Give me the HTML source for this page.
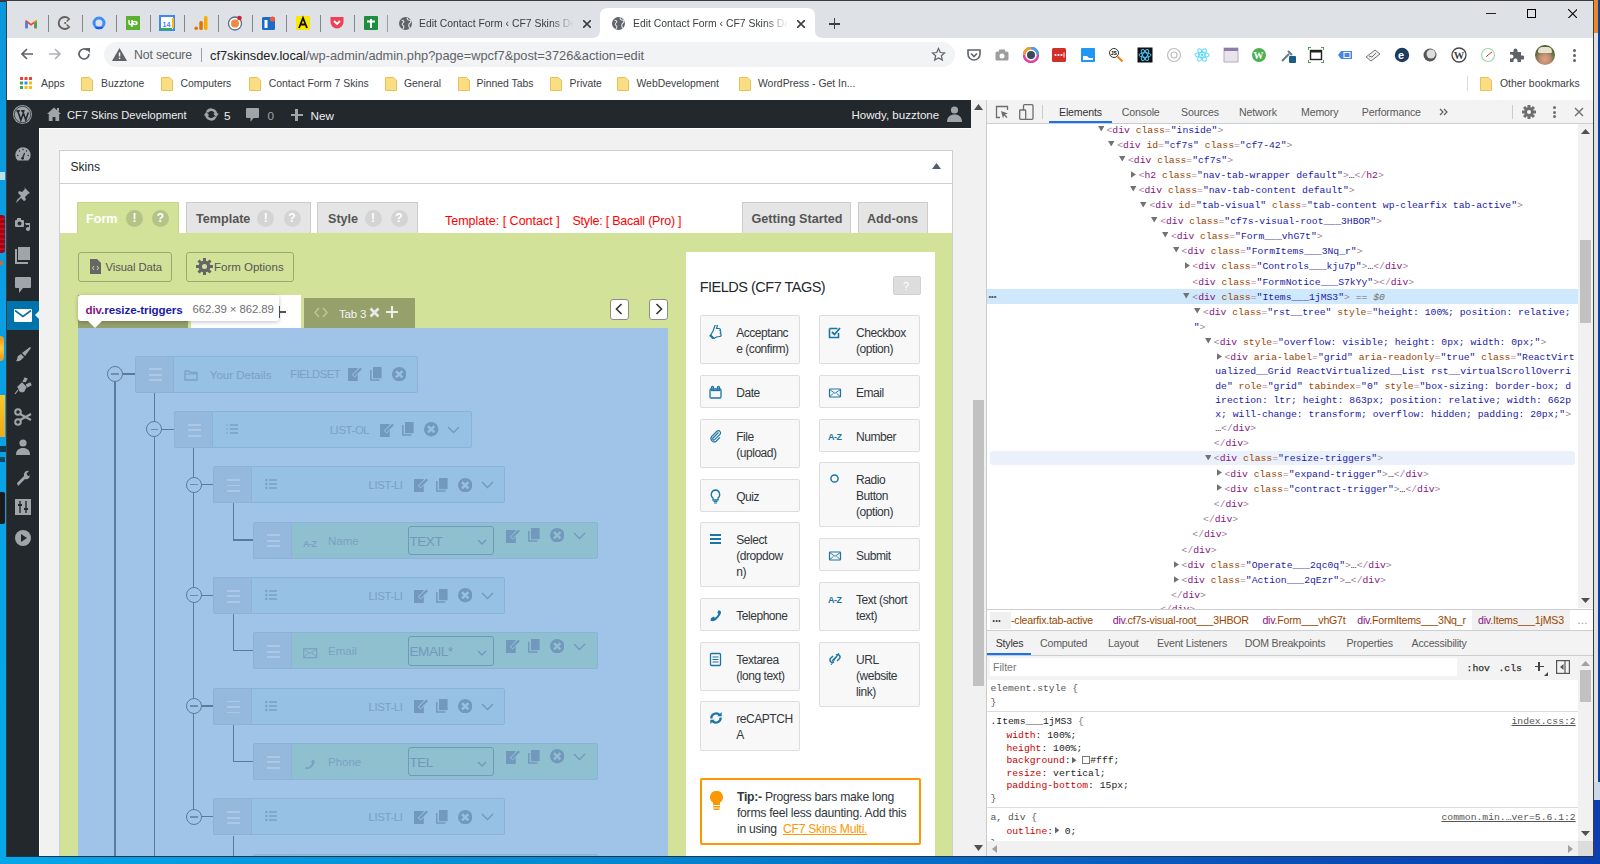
<!DOCTYPE html>
<html><head><meta charset="utf-8"><style>
html,body{margin:0;padding:0}
body{width:1600px;height:864px;overflow:hidden;position:relative;background:#0a98dc;font-family:"Liberation Sans",sans-serif}
body div{position:absolute;box-sizing:content-box}
body span div, body div span{position:static}
</style></head><body>
<div style="left:0px;top:0px;width:7px;height:864px;background:linear-gradient(#0a98dc,#08a4e6 60%,#06a8ea);"></div>
<div style="left:1594px;top:0px;width:6px;height:864px;background:linear-gradient(#e98a22 0,#e98a22 33px,#e0e0e0 33px,#e0e0e0 782px,#c8d8e8 782px,#c8d8e8 800px,#0d3fae 800px);"></div>
<div style="left:1598px;top:0px;width:2px;height:782px;background:#0b3fa8;"></div>
<div style="left:0px;top:215px;width:5px;height:38px;background:repeating-linear-gradient(#a8000f 0,#a8000f 3px,#c0101c 3px,#c0101c 5px);border-radius:0 3px 3px 0;"></div>
<div style="left:0px;top:261px;width:3px;height:4px;background:#d06a20;"></div>
<div style="left:0px;top:336px;width:4px;height:25px;background:radial-gradient(circle at 0 50%,#ffd040,#f0a020 70%);border-radius:0 12px 12px 0;"></div>
<div style="left:0px;top:395px;width:5px;height:42px;background:linear-gradient(#f8c828,#f0a818);"></div>
<div style="left:0px;top:446px;width:6px;height:6px;background:#111;opacity:.7;"></div>
<div style="left:0px;top:457px;width:5px;height:5px;background:#111;opacity:.6;"></div>
<div style="left:0px;top:492px;width:5px;height:32px;background:#1a1a1a;border-radius:0 2px 2px 0;"></div>
<div style="left:0px;top:172px;width:5px;height:8px;background:#eee;opacity:.8;"></div>
<div style="left:0px;top:0px;width:7px;height:2px;background:#3a3a3a;"></div>
<div style="left:6px;top:0px;width:1588px;height:857px;background:#3c3c3c;"></div>
<div style="left:7px;top:1px;width:1586px;height:37px;background:#dee1e6;"></div>
<div style="left:48px;top:15px;width:1px;height:17px;background:#80868b;"></div>
<div style="left:82px;top:15px;width:1px;height:17px;background:#80868b;"></div>
<div style="left:116px;top:15px;width:1px;height:17px;background:#80868b;"></div>
<div style="left:150px;top:15px;width:1px;height:17px;background:#80868b;"></div>
<div style="left:184px;top:15px;width:1px;height:17px;background:#80868b;"></div>
<div style="left:218px;top:15px;width:1px;height:17px;background:#80868b;"></div>
<div style="left:252px;top:15px;width:1px;height:17px;background:#80868b;"></div>
<div style="left:286px;top:15px;width:1px;height:17px;background:#80868b;"></div>
<div style="left:320px;top:15px;width:1px;height:17px;background:#80868b;"></div>
<div style="left:354px;top:15px;width:1px;height:17px;background:#80868b;"></div>
<svg style="position:absolute;left:23px;top:15px;width:16px;height:16px" viewBox="0 0 16 16"><g transform="translate(1.5 2.5) scale(0.82)"><path d="M1 4v9h3V7l4 3 4-3v6h3V4l-1-1-6 4.5L2 3z" fill="#ea4335"/><path d="M1 4v9h3V7z" fill="#4285f4"/><path d="M12 7v6h3V4z" fill="#34a853"/><path d="M15 4l-1-1-2 1.5V7z" fill="#fbbc04"/></g></svg>
<svg style="position:absolute;left:57px;top:15px;width:16px;height:16px" viewBox="0 0 16 16"><path d="M11.8 3.6A6 6 0 1 0 11.8 12.4" stroke="#616161" stroke-width="1.9" fill="none"/><circle cx="8.2" cy="8" r="1.1" fill="#616161"/><path d="M9.6 6.6l3.2-3.2M9.6 9.4l3.2 3.2" stroke="#616161" stroke-width="1.4"/></svg>
<svg style="position:absolute;left:91px;top:15px;width:16px;height:16px" viewBox="0 0 16 16"><circle cx="8" cy="8" r="5" stroke="#3f8ef7" stroke-width="3" fill="none"/><path d="M4 12h8l-1 2H5z" fill="#2456f0"/></svg>
<svg style="position:absolute;left:125px;top:15px;width:16px;height:16px" viewBox="0 0 16 16"><rect x="1" y="1" width="14" height="14" fill="#6fda44" /><rect x="1" y="1" width="14" height="14" fill="#5cb030"/><path d="M4 5v3c0 2 3 2 3 0V5M7 12V8c0-2 5-2 5 0s-4 2-4 0" stroke="#fff" stroke-width="1.4" fill="none"/></svg>
<svg style="position:absolute;left:159px;top:15px;width:16px;height:16px" viewBox="0 0 16 16"><rect x="1" y="1" width="14" height="14" fill="#fff" stroke="#4285f4" stroke-width="2"/><rect x="13" y="3" width="2" height="10" fill="#fbbc04"/><rect x="1" y="13" width="12" height="2" fill="#34a853"/><text x="3.5" y="11.5" font-size="7" font-family="Liberation Sans" font-weight="bold" fill="#4285f4">14</text></svg>
<svg style="position:absolute;left:193px;top:15px;width:16px;height:16px" viewBox="0 0 16 16"><rect x="11" y="1" width="3.5" height="14" rx="1.5" fill="#f9ab00"/><rect x="6.3" y="6" width="3.5" height="9" rx="1.5" fill="#e37400"/><circle cx="3.2" cy="13.2" r="1.8" fill="#e37400"/></svg>
<svg style="position:absolute;left:227px;top:15px;width:16px;height:16px" viewBox="0 0 16 16"><circle cx="8" cy="8.5" r="6.5" fill="#fff" stroke="#5b6f8a" stroke-width="1.3"/><circle cx="8" cy="8.5" r="4" fill="#f08a3c"/><circle cx="12.5" cy="3" r="2.3" fill="#d0223a"/></svg>
<svg style="position:absolute;left:261px;top:15px;width:16px;height:16px" viewBox="0 0 16 16"><rect x="1" y="2" width="13" height="13" rx="1.5" fill="#1b6ac9"/><rect x="3.5" y="5" width="3" height="8" fill="#fff"/><circle cx="11.5" cy="4" r="2.6" fill="#ef5a3a"/></svg>
<svg style="position:absolute;left:295px;top:15px;width:16px;height:16px" viewBox="0 0 16 16"><rect x="1" y="1" width="14" height="14" fill="#fce903"/><path d="M4 13L8 3l4 10M5.5 9.5h5" stroke="#111" stroke-width="1.8" fill="none"/></svg>
<svg style="position:absolute;left:329px;top:15px;width:16px;height:16px" viewBox="0 0 16 16"><path d="M1.5 2h13v5a6.5 6.5 0 0 1-13 0z" fill="#ef4056"/><path d="M5 6l3 3 3-3" stroke="#fff" stroke-width="1.8" fill="none"/></svg>
<svg style="position:absolute;left:363px;top:15px;width:16px;height:16px" viewBox="0 0 16 16"><rect x="1" y="1" width="14" height="14" rx="1" fill="#1e8e3e"/><path d="M8 4v9M4 6.5h8" stroke="#fff" stroke-width="2"/></svg>
<div style="left:387px;top:15px;width:1px;height:17px;background:#9aa0a6;"></div>
<svg style="position:absolute;left:399px;top:17px;width:13px;height:13px" viewBox="0 0 16 16"><circle cx="8" cy="8" r="8" fill="#5f6368"/><path d="M3 4c2 0 3 1 3 2s-2 1-2 3 2 1 2 3c0 1-1 2-1 3M10 1c0 2 1 3 3 3s2 2 1 3-2 1-2 3 1 3 1 4" stroke="#dee1e6" stroke-width="1.4" fill="none"/></svg>
<div style="left:419px;top:15.84px;font-family:'Liberation Sans', sans-serif;font-size:12px;line-height:15.0px;color:#3c4043;white-space:pre;width:155px;overflow:hidden;font-size:10.4px;-webkit-mask-image:linear-gradient(90deg,#000 85%,transparent);">Edit Contact Form ‹ CF7 Skins De</div>
<svg style="position:absolute;left:583px;top:20px;width:8px;height:8px" viewBox="0 0 8 8"><path d="M0 0L8 8M8 0L0 8" stroke="#3c4043" stroke-width="1.6"/></svg>
<svg style="left:592px;top:8px;width:232px;height:30px;position:absolute" viewBox="0 0 232 30"><path d="M0 30 Q8 30 8 22 L8 8 Q8 0 16 0 L215 0 Q223 0 223 8 L223 22 Q223 30 231 30 Z" fill="#fff"/></svg>
<svg style="position:absolute;left:612px;top:17px;width:13px;height:13px" viewBox="0 0 16 16"><circle cx="8" cy="8" r="8" fill="#5f6368"/><path d="M3 4c2 0 3 1 3 2s-2 1-2 3 2 1 2 3c0 1-1 2-1 3M10 1c0 2 1 3 3 3s2 2 1 3-2 1-2 3 1 3 1 4" stroke="#dee1e6" stroke-width="1.4" fill="none"/></svg>
<div style="left:633px;top:15.84px;font-family:'Liberation Sans', sans-serif;font-size:12px;line-height:15.0px;color:#3c4043;white-space:pre;width:155px;overflow:hidden;font-size:10.4px;-webkit-mask-image:linear-gradient(90deg,#000 85%,transparent);">Edit Contact Form ‹ CF7 Skins De</div>
<svg style="position:absolute;left:797px;top:20px;width:8px;height:8px" viewBox="0 0 8 8"><path d="M0 0L8 8M8 0L0 8" stroke="#3c4043" stroke-width="1.6"/></svg>
<div style="left:829px;top:23px;width:11px;height:1.6px;background:#3c4043;"></div>
<div style="left:833.7px;top:18px;width:1.6px;height:11px;background:#3c4043;"></div>
<div style="left:1486px;top:13.3px;width:9.5px;height:1.2px;background:#222;"></div>
<div style="left:1527px;top:9px;width:9px;height:9px;border:1px solid #000;box-sizing:border-box;"></div>
<svg style="position:absolute;left:1567.5px;top:8.8px;width:9.5px;height:9.5px" viewBox="0 0 10 10"><path d="M0 0L10 10M10 0L0 10" stroke="#000" stroke-width="1.1"/></svg>
<div style="left:7px;top:38px;width:1586px;height:62px;background:#fff;"></div>
<svg style="position:absolute;left:19px;top:46px;width:16px;height:16px" viewBox="0 0 16 16"><path d="M14 8H3M8 3L3 8l5 5" stroke="#5f6368" stroke-width="1.7" fill="none"/></svg>
<svg style="position:absolute;left:47px;top:46px;width:16px;height:16px" viewBox="0 0 16 16"><path d="M2 8h11M8 3l5 5-5 5" stroke="#b0b3b8" stroke-width="1.7" fill="none"/></svg>
<svg style="position:absolute;left:76px;top:46px;width:16px;height:16px" viewBox="0 0 16 16"><path d="M13 8A5 5 0 1 1 11.5 4.4" stroke="#5f6368" stroke-width="1.7" fill="none"/><path d="M9 2h5v5z" fill="#5f6368"/></svg>
<div style="left:104px;top:42px;width:851px;height:25px;background:#f1f3f4;border-radius:13px;"></div>
<svg style="position:absolute;left:112px;top:48px;width:15px;height:13px" viewBox="0 0 15 13"><path d="M7.5 0L15 13H0z" fill="#5f6368"/><rect x="6.8" y="4.5" width="1.5" height="4" fill="#f1f3f4"/><rect x="6.8" y="9.6" width="1.5" height="1.5" fill="#f1f3f4"/></svg>
<div style="left:134px;top:48.34px;font-family:'Liberation Sans', sans-serif;font-size:12px;line-height:15.0px;color:#5f6368;white-space:pre;font-size:12.3px;letter-spacing:-0.15px;">Not secure</div>
<div style="left:201px;top:48px;width:1px;height:14px;background:#9aa0a6;"></div>
<div style="left:210px;top:48.34px;font-family:'Liberation Sans', sans-serif;font-size:12px;line-height:15.0px;color:#202124;white-space:pre;font-size:12.8px;">cf7skinsdev.local<span style="color:#5f6368">/wp-admin/admin.php?page=wpcf7&amp;post=3726&amp;action=edit</span></div>
<svg style="position:absolute;left:931px;top:47px;width:15px;height:15px" viewBox="0 0 24 24"><path d="M12 2.5l2.9 6.3 6.9.7-5.2 4.6 1.5 6.8L12 17.4l-6.1 3.5 1.5-6.8-5.2-4.6 6.9-.7z" stroke="#5f6368" stroke-width="2" fill="none"/></svg>
<svg style="position:absolute;left:965.6px;top:46.5px;width:16px;height:16px" viewBox="0 0 16 16"><path d="M2 3h12v4a6 6 0 0 1-12 0z" stroke="#5f6368" stroke-width="1.6" fill="none"/><path d="M5 6.5l3 3 3-3" stroke="#5f6368" stroke-width="1.6" fill="none"/></svg>
<svg style="position:absolute;left:994.0px;top:46.5px;width:16px;height:16px" viewBox="0 0 16 16"><rect x="1.5" y="4.5" width="13" height="9" rx="1.5" fill="#9e9e9e"/><rect x="5" y="2.5" width="6" height="3" fill="#9e9e9e"/><circle cx="8" cy="9" r="2.5" fill="#fff"/></svg>
<svg style="position:absolute;left:1022.6px;top:46.5px;width:16px;height:16px" viewBox="0 0 16 16"><circle cx="8" cy="8" r="7" fill="none" stroke="#e040a0" stroke-width="2.5"/><path d="M8 1a7 7 0 0 1 7 7" stroke="#3ea0f0" stroke-width="2.5" fill="none"/><path d="M1 8a7 7 0 0 1 7-7" stroke="#f0a020" stroke-width="2.5" fill="none"/><circle cx="8" cy="8" r="4" fill="#3a4a5a"/></svg>
<svg style="position:absolute;left:1051.0px;top:46.5px;width:16px;height:16px" viewBox="0 0 16 16"><rect x="1" y="1" width="14" height="14" rx="1.5" fill="#d32d27"/><circle cx="4.5" cy="8" r="1.1" fill="#fff"/><circle cx="7.5" cy="8" r="1.1" fill="#fff"/><circle cx="10.5" cy="8" r="1.1" fill="#fff"/><rect x="12.5" y="5.5" width="1" height="5" fill="#fff"/></svg>
<svg style="position:absolute;left:1079.6px;top:46.5px;width:16px;height:16px" viewBox="0 0 16 16"><rect x="1" y="1" width="14" height="14" rx="1" fill="#2196f3"/><path d="M3 9h4l2 2h4v2H3z" fill="#fff"/></svg>
<svg style="position:absolute;left:1108.0px;top:46.5px;width:16px;height:16px" viewBox="0 0 16 16"><circle cx="6" cy="6" r="4.5" fill="#fff" stroke="#333" stroke-width="1"/><text x="2.8" y="8" font-size="5" font-weight="bold" font-family="Liberation Sans">JS</text><path d="M9.5 9.5l5 5" stroke="#f57c00" stroke-width="1.8"/></svg>
<svg style="position:absolute;left:1137.0px;top:46.5px;width:16px;height:16px" viewBox="0 0 16 16"><rect x="0.5" y="0.5" width="15" height="15" fill="#111"/><ellipse cx="8" cy="8" rx="6" ry="2.3" stroke="#4fc3f7" fill="none" stroke-width="1"/><ellipse cx="8" cy="8" rx="6" ry="2.3" stroke="#4fc3f7" fill="none" stroke-width="1" transform="rotate(60 8 8)"/><ellipse cx="8" cy="8" rx="6" ry="2.3" stroke="#4fc3f7" fill="none" stroke-width="1" transform="rotate(-60 8 8)"/></svg>
<svg style="position:absolute;left:1165.6px;top:46.5px;width:16px;height:16px" viewBox="0 0 16 16"><circle cx="8" cy="8" r="6.5" fill="none" stroke="#bdbdbd" stroke-width="1.2"/><circle cx="8" cy="8" r="3" fill="none" stroke="#bdbdbd" stroke-width="1.2"/></svg>
<svg style="position:absolute;left:1194.0px;top:46.5px;width:16px;height:16px" viewBox="0 0 16 16"><ellipse cx="8" cy="8" rx="7" ry="2.5" stroke="#61dafb" fill="none" stroke-width="1.1"/><ellipse cx="8" cy="8" rx="7" ry="2.5" stroke="#61dafb" fill="none" stroke-width="1.1" transform="rotate(60 8 8)"/><ellipse cx="8" cy="8" rx="7" ry="2.5" stroke="#61dafb" fill="none" stroke-width="1.1" transform="rotate(-60 8 8)"/><circle cx="8" cy="8" r="1.3" fill="#61dafb"/></svg>
<svg style="position:absolute;left:1222.6px;top:46.5px;width:16px;height:16px" viewBox="0 0 16 16"><rect x="1" y="1" width="14" height="14" fill="#e8e4ec" stroke="#b6a8c4"/><rect x="1" y="1" width="14" height="3" fill="#8e7aa8"/></svg>
<svg style="position:absolute;left:1251.0px;top:46.5px;width:16px;height:16px" viewBox="0 0 16 16"><circle cx="8" cy="8" r="7" fill="#4caf50"/><text x="2.6" y="11.8" font-size="10" font-weight="bold" font-family="Liberation Serif" fill="#fff">W</text></svg>
<svg style="position:absolute;left:1280.0px;top:46.5px;width:16px;height:16px" viewBox="0 0 16 16"><path d="M2 14l7-7M8 4l4 4" stroke="#607d8b" stroke-width="2"/><rect x="9" y="9" width="7" height="7" rx="1" fill="#1a5b8a"/></svg>
<svg style="position:absolute;left:1308.0px;top:46.5px;width:16px;height:16px" viewBox="0 0 16 16"><rect x="2.5" y="3.5" width="11" height="9" fill="none" stroke="#222" stroke-width="1.4"/><rect x="2.5" y="3.5" width="11" height="2" fill="#222"/><path d="M0 0h3M0 0v3M16 0h-3M16 0v3M0 16h3M0 16v-3M16 16h-3M16 16v-3" stroke="#2e7d32" stroke-width="1.5"/></svg>
<svg style="position:absolute;left:1337.0px;top:46.5px;width:16px;height:16px" viewBox="0 0 16 16"><path d="M1 8l3-4h11v8H4z" fill="#4a86e8"/><rect x="7" y="5.5" width="6" height="5" fill="none" stroke="#fff" stroke-width="1"/></svg>
<svg style="position:absolute;left:1365.0px;top:46.5px;width:16px;height:16px" viewBox="0 0 16 16"><path d="M1 10l9-7 5 4-9 7z" fill="#eee" stroke="#777" stroke-width="1"/><path d="M4 9l3 1 4-4" stroke="#555" stroke-width="0.8" fill="none"/></svg>
<svg style="position:absolute;left:1394.0px;top:46.5px;width:16px;height:16px" viewBox="0 0 16 16"><circle cx="8" cy="8" r="7.2" fill="#1d3a5f"/><text x="4" y="12" font-size="11" font-weight="bold" font-family="Liberation Sans" fill="#fff">e</text></svg>
<svg style="position:absolute;left:1422.0px;top:46.5px;width:16px;height:16px" viewBox="0 0 16 16"><circle cx="8" cy="8" r="6.5" fill="#555"/><circle cx="9" cy="7" r="4.5" fill="#ddd"/></svg>
<svg style="position:absolute;left:1451.0px;top:46.5px;width:16px;height:16px" viewBox="0 0 16 16"><circle cx="8" cy="8" r="7" fill="#fff" stroke="#444" stroke-width="1.3"/><text x="2.8" y="12" font-size="10.5" font-weight="bold" font-family="Liberation Serif" fill="#444">W</text></svg>
<svg style="position:absolute;left:1480.0px;top:46.5px;width:16px;height:16px" viewBox="0 0 16 16"><circle cx="8" cy="8" r="6.5" fill="none" stroke="#a5d6a7" stroke-width="1.2"/><path d="M8 8l4-3M8 8l-2 2" stroke="#e53935" stroke-width="1"/><path d="M8 8l-1 1" stroke="#3949ab" stroke-width="1"/></svg>
<svg style="position:absolute;left:1508.0px;top:46.5px;width:16px;height:16px" viewBox="0 0 16 16"><path d="M2 5h3.5V3.5a2 2 0 0 1 4 0V5H13v3.5h1.5a2 2 0 0 1 0 4H13V15H9.5v-1.5a2 2 0 0 0-4 0V15H2v-3.5h1.5a2 2 0 0 0 0-4H2z" fill="#5f6368"/></svg>
<div style="left:1535px;top:45px;width:20px;height:20px;border-radius:50%;background:radial-gradient(circle at 50% 70%,#d9a58a 0,#c48c70 30%,#5b6a3a 60%,#3e4a2a 100%);overflow:hidden"><div style="position:absolute;left:3px;top:2px;width:14px;height:6px;background:#e8e2d0;border-radius:6px 6px 2px 2px"></div></div>
<div style="left:1572.5px;top:48.5px;width:3px;height:3px;background:#5f6368;border-radius:50%;"></div>
<div style="left:1572.5px;top:53.5px;width:3px;height:3px;background:#5f6368;border-radius:50%;"></div>
<div style="left:1572.5px;top:58.5px;width:3px;height:3px;background:#5f6368;border-radius:50%;"></div>
<svg style="position:absolute;left:20px;top:77px;width:13px;height:13px" viewBox="0 0 13 13"><rect x="0.0" y="0.0" width="3" height="3" fill="#ea4335"/><rect x="4.5" y="0.0" width="3" height="3" fill="#ea4335"/><rect x="9.0" y="0.0" width="3" height="3" fill="#ea4335"/><rect x="0.0" y="4.5" width="3" height="3" fill="#34a853"/><rect x="4.5" y="4.5" width="3" height="3" fill="#4285f4"/><rect x="9.0" y="4.5" width="3" height="3" fill="#fbbc05"/><rect x="0.0" y="9.0" width="3" height="3" fill="#34a853"/><rect x="4.5" y="9.0" width="3" height="3" fill="#fbbc05"/><rect x="9.0" y="9.0" width="3" height="3" fill="#fbbc05"/></svg>
<div style="left:41px;top:76.34px;font-family:'Liberation Sans', sans-serif;font-size:12px;line-height:15.0px;color:#3c4043;white-space:pre;font-size:10.4px;">Apps</div>
<svg style="position:absolute;left:81px;top:77px;width:12px;height:14px" viewBox="0 0 12 14"><path d="M0.5 0.5h8l3 3v10h-11z" fill="#fbdd84" stroke="#e8c15a" stroke-width="1"/></svg>
<div style="left:101px;top:76.34px;font-family:'Liberation Sans', sans-serif;font-size:12px;line-height:15.0px;color:#3c4043;white-space:pre;font-size:10.4px;">Buzztone</div>
<svg style="position:absolute;left:161px;top:77px;width:12px;height:14px" viewBox="0 0 12 14"><path d="M0.5 0.5h8l3 3v10h-11z" fill="#fbdd84" stroke="#e8c15a" stroke-width="1"/></svg>
<div style="left:180.5px;top:76.34px;font-family:'Liberation Sans', sans-serif;font-size:12px;line-height:15.0px;color:#3c4043;white-space:pre;font-size:10.4px;">Computers</div>
<svg style="position:absolute;left:249px;top:77px;width:12px;height:14px" viewBox="0 0 12 14"><path d="M0.5 0.5h8l3 3v10h-11z" fill="#fbdd84" stroke="#e8c15a" stroke-width="1"/></svg>
<div style="left:268.75px;top:76.34px;font-family:'Liberation Sans', sans-serif;font-size:12px;line-height:15.0px;color:#3c4043;white-space:pre;font-size:10.4px;">Contact Form 7 Skins</div>
<svg style="position:absolute;left:385px;top:77px;width:12px;height:14px" viewBox="0 0 12 14"><path d="M0.5 0.5h8l3 3v10h-11z" fill="#fbdd84" stroke="#e8c15a" stroke-width="1"/></svg>
<div style="left:404px;top:76.34px;font-family:'Liberation Sans', sans-serif;font-size:12px;line-height:15.0px;color:#3c4043;white-space:pre;font-size:10.4px;">General</div>
<svg style="position:absolute;left:458px;top:77px;width:12px;height:14px" viewBox="0 0 12 14"><path d="M0.5 0.5h8l3 3v10h-11z" fill="#fbdd84" stroke="#e8c15a" stroke-width="1"/></svg>
<div style="left:476.5px;top:76.34px;font-family:'Liberation Sans', sans-serif;font-size:12px;line-height:15.0px;color:#3c4043;white-space:pre;font-size:10.4px;">Pinned Tabs</div>
<svg style="position:absolute;left:550px;top:77px;width:12px;height:14px" viewBox="0 0 12 14"><path d="M0.5 0.5h8l3 3v10h-11z" fill="#fbdd84" stroke="#e8c15a" stroke-width="1"/></svg>
<div style="left:569.5px;top:76.34px;font-family:'Liberation Sans', sans-serif;font-size:12px;line-height:15.0px;color:#3c4043;white-space:pre;font-size:10.4px;">Private</div>
<svg style="position:absolute;left:617px;top:77px;width:12px;height:14px" viewBox="0 0 12 14"><path d="M0.5 0.5h8l3 3v10h-11z" fill="#fbdd84" stroke="#e8c15a" stroke-width="1"/></svg>
<div style="left:636.5px;top:76.34px;font-family:'Liberation Sans', sans-serif;font-size:12px;line-height:15.0px;color:#3c4043;white-space:pre;font-size:10.4px;">WebDevelopment</div>
<svg style="position:absolute;left:739px;top:77px;width:12px;height:14px" viewBox="0 0 12 14"><path d="M0.5 0.5h8l3 3v10h-11z" fill="#fbdd84" stroke="#e8c15a" stroke-width="1"/></svg>
<div style="left:758px;top:76.34px;font-family:'Liberation Sans', sans-serif;font-size:12px;line-height:15.0px;color:#3c4043;white-space:pre;font-size:10.4px;">WordPress - Get In...</div>
<div style="left:1467px;top:76px;width:1px;height:15px;background:#dadce0;"></div>
<svg style="position:absolute;left:1479.5px;top:77px;width:12px;height:14px" viewBox="0 0 12 14"><path d="M0.5 0.5h8l3 3v10h-11z" fill="#fbdd84" stroke="#e8c15a" stroke-width="1"/></svg>
<div style="left:1500px;top:76.34px;font-family:'Liberation Sans', sans-serif;font-size:12px;line-height:15.0px;color:#3c4043;white-space:pre;font-size:10.4px;">Other bookmarks</div>
<div style="left:7px;top:100px;width:980px;height:756px;background:#f1f1f1;"></div>
<div style="left:7px;top:100px;width:964px;height:29px;background:#23282d;"></div>
<div style="left:7px;top:129px;width:32px;height:727px;background:#23282d;"></div>
<div style="left:39px;top:128px;width:932px;height:1px;background:#fff;"></div>
<div style="left:39px;top:128px;width:1px;height:728px;background:#fff;"></div>
<svg style="position:absolute;left:12.7px;top:104.9px;width:19px;height:19px" viewBox="0 0 20 20"><circle cx="10" cy="10" r="10" fill="#a0a5aa"/><circle cx="10" cy="10" r="8.6" fill="none" stroke="#23282d" stroke-width="0.8"/><path d="M3.6 6.2h3.6M5 6.2l3.3 9.6 2.3-6.6M8.6 6.2h3.6M10.2 6.2l3.3 9.6 2.6-7.8" stroke="#23282d" stroke-width="1.7" fill="none"/></svg>
<svg style="position:absolute;left:46.5px;top:107.3px;width:14px;height:14px" viewBox="0 0 14 14"><path d="M7 .5L0 7h1.8v7h3.8v-4h2.8v4h3.8V7H14z" fill="#a0a5aa"/><rect x="10" y="1" width="2" height="3.5" fill="#a0a5aa"/></svg>
<div style="left:67px;top:108.04px;font-family:'Liberation Sans', sans-serif;font-size:12px;line-height:15.0px;color:#eee;white-space:pre;font-size:11.1px;">CF7 Skins Development</div>
<svg style="position:absolute;left:202.5px;top:107.8px;width:16.5px;height:13px" viewBox="0 0 16.5 13"><path d="M4.09 4.1A4.8 4.8 0 0 1 13.05 6.5M12.41 8.9A4.8 4.8 0 0 1 3.45 6.5" stroke="#a0a5aa" stroke-width="2.5" fill="none"/><path d="M10.2 5.6h5.7L13.05 9.3z" fill="#a0a5aa"/><path d="M.6 7.4h5.7L3.45 3.7z" fill="#a0a5aa"/></svg>
<div style="left:224px;top:108.04px;font-family:'Liberation Sans', sans-serif;font-size:12px;line-height:15.0px;color:#eee;white-space:pre;font-size:11.7px;">5</div>
<svg style="position:absolute;left:246px;top:108px;width:13px;height:14px" viewBox="0 0 13 14"><path d="M1 0h11a1 1 0 0 1 1 1v8a1 1 0 0 1-1 1H7.5L4.5 14v-4H1a1 1 0 0 1-1-1V1a1 1 0 0 1 1-1z" fill="#a0a5aa"/></svg>
<div style="left:267.5px;top:108.04px;font-family:'Liberation Sans', sans-serif;font-size:12px;line-height:15.0px;color:#a0a5aa;white-space:pre;font-size:11.7px;">0</div>
<div style="left:290.5px;top:113.7px;width:12.5px;height:2.8px;background:#a0a5aa;"></div>
<div style="left:295.35px;top:108.9px;width:2.8px;height:12.5px;background:#a0a5aa;"></div>
<div style="left:310.5px;top:108.04px;font-family:'Liberation Sans', sans-serif;font-size:12px;line-height:15.0px;color:#eee;white-space:pre;font-size:11.7px;">New</div>
<div style="left:851.5px;top:108.04px;font-family:'Liberation Sans', sans-serif;font-size:12px;line-height:15.0px;color:#eee;white-space:pre;font-size:11.55px;">Howdy, buzztone</div>
<svg style="position:absolute;left:947px;top:106px;width:15px;height:16px" viewBox="0 0 15 16"><circle cx="7.5" cy="4" r="3.6" fill="#a0a5aa"/><path d="M0 16c0-5 3-7.5 7.5-7.5S15 11 15 16z" fill="#a0a5aa"/></svg>
<svg style="position:absolute;left:14px;top:145px;width:18px;height:18px" viewBox="0 0 18 18"><path d="M3.6 15.5A7.7 7.7 0 1 1 14.4 15.5z" fill="#a0a5aa"/><path d="M8.6 13l2-5" stroke="#23282d" stroke-width="1.3"/><circle cx="8.6" cy="13.3" r="1.4" fill="#23282d"/><circle cx="3.8" cy="10.5" r=".7" fill="#23282d"/><circle cx="5.5" cy="6" r=".7" fill="#23282d"/><circle cx="9" cy="4.5" r=".7" fill="#23282d"/><circle cx="12.5" cy="6" r=".7" fill="#23282d"/><circle cx="14.2" cy="10.5" r=".7" fill="#23282d"/></svg>
<svg style="position:absolute;left:14px;top:185px;width:18px;height:18px" viewBox="0 0 18 18"><path d="M10 2l6 6-2 1-3 3 1 3-2 1-3-3-5 5 1-3 4-4-3-3 1-2 3 1 3-3z" fill="#a0a5aa"/></svg>
<svg style="position:absolute;left:14px;top:215px;width:18px;height:18px" viewBox="0 0 18 18"><rect x="1" y="5" width="9" height="7" rx="1" fill="#a0a5aa"/><rect x="3" y="3" width="4" height="3" fill="#a0a5aa"/><path d="M11 8h5v6a2 2 0 1 1-1-1.7V10h-3z" fill="#a0a5aa"/><circle cx="5.5" cy="8.5" r="2" fill="#23282d"/></svg>
<svg style="position:absolute;left:14px;top:246px;width:18px;height:18px" viewBox="0 0 18 18"><rect x="4" y="1" width="12" height="13" fill="#a0a5aa"/><path d="M2 3v14h12" stroke="#a0a5aa" stroke-width="2" fill="none"/></svg>
<svg style="position:absolute;left:14px;top:276px;width:18px;height:18px" viewBox="0 0 18 18"><path d="M2 1h14a1 1 0 0 1 1 1v9a1 1 0 0 1-1 1H9l-4 5v-5H2a1 1 0 0 1-1-1V2a1 1 0 0 1 1-1z" fill="#a0a5aa"/></svg>
<svg style="position:absolute;left:14px;top:346px;width:18px;height:18px" viewBox="0 0 18 18"><path d="M16 1l1 1-6 8-3-3zM7 8l3 3-2 2c-1 1-3 3-6 2 2-2 1-4 2-5z" fill="#a0a5aa"/></svg>
<svg style="position:absolute;left:14px;top:377px;width:18px;height:18px" viewBox="0 0 18 18"><path d="M4 10l4-4 4 4-2 4c-1 1-3 1-4 0zM9 5l2-4 2 1-2 3M12 8l4-2 1 2-4 2M4 13l-3 4" fill="#a0a5aa" stroke="#a0a5aa" stroke-width="1.2"/></svg>
<svg style="position:absolute;left:14px;top:408px;width:18px;height:18px" viewBox="0 0 18 18"><circle cx="4" cy="4" r="2.8" fill="none" stroke="#a0a5aa" stroke-width="2"/><circle cx="4" cy="14" r="2.8" fill="none" stroke="#a0a5aa" stroke-width="2"/><path d="M6 6l11 6M6 12l11-6" stroke="#a0a5aa" stroke-width="2"/></svg>
<svg style="position:absolute;left:14px;top:438px;width:18px;height:18px" viewBox="0 0 18 18"><circle cx="9" cy="5" r="3.6" fill="#a0a5aa"/><path d="M2 17c0-5 3-7 7-7s7 2 7 7z" fill="#a0a5aa"/></svg>
<svg style="position:absolute;left:14px;top:468px;width:18px;height:18px" viewBox="0 0 18 18"><path d="M3 15l7-7a4 4 0 0 1 5-5l-2.5 2.5 1 2 2 1L16 6a4 4 0 0 1-5 5l-7 7z" fill="#a0a5aa"/></svg>
<svg style="position:absolute;left:14px;top:498px;width:18px;height:18px" viewBox="0 0 18 18"><rect x="1" y="1" width="16" height="16" fill="#a0a5aa"/><path d="M6 3v12M12 3v12" stroke="#23282d" stroke-width="1.4"/><rect x="4" y="6" width="4" height="2" fill="#23282d"/><rect x="10" y="10" width="4" height="2" fill="#23282d"/></svg>
<svg style="position:absolute;left:14px;top:529px;width:18px;height:18px" viewBox="0 0 18 18"><circle cx="9" cy="9" r="8" fill="#a0a5aa"/><path d="M7 5l6 4-6 4z" fill="#23282d"/></svg>
<div style="left:7px;top:301px;width:32px;height:29px;background:#0073aa;"></div>
<svg style="position:absolute;left:14px;top:309px;width:18px;height:13px" viewBox="0 0 18 13"><rect x="0" y="0" width="18" height="13" rx="1" fill="#fff"/><path d="M1 1.5l8 6 8-6" stroke="#0073aa" stroke-width="1.6" fill="none"/></svg>
<svg style="position:absolute;left:35px;top:310px;width:5px;height:10px" viewBox="0 0 5 10"><path d="M5 0L0 5l5 5z" fill="#f1f1f1"/></svg>
<div style="left:971px;top:100px;width:15px;height:756px;background:#f1f1f1;"></div>
<svg style="position:absolute;left:974px;top:104px;width:9px;height:6px" viewBox="0 0 9 6"><path d="M0 6L4.5 0 9 6z" fill="#505050"/></svg>
<div style="left:973px;top:400px;width:11px;height:286px;background:#c1c1c1;"></div>
<svg style="position:absolute;left:974px;top:845px;width:9px;height:6px" viewBox="0 0 9 6"><path d="M0 0L4.5 6 9 0z" fill="#505050"/></svg>
<div style="left:59px;top:150px;width:894px;height:706px;background:#fff;border:1px solid #ccd0d4;box-sizing:border-box;border-bottom:none;"></div>
<div style="left:60px;top:183px;width:892px;height:1px;background:#ccd0d4;"></div>
<div style="left:70.5px;top:160.34px;font-family:'Liberation Sans', sans-serif;font-size:12px;line-height:15.0px;color:#23282d;white-space:pre;font-size:12.1px;">Skins</div>
<svg style="position:absolute;left:932px;top:163px;width:9px;height:6px" viewBox="0 0 9 6"><path d="M0 6L4.5 0 9 6z" fill="#555d66"/></svg>
<div style="left:77px;top:202px;width:102px;height:31px;background:#d3e299;border:1px solid #c5d68a;border-bottom:none;box-sizing:border-box;"></div>
<div style="left:86px;top:210.87px;font-family:'Liberation Sans', sans-serif;font-size:13px;line-height:16.25px;color:#fff;white-space:pre;font-weight:bold;font-size:12.6px;">Form</div>
<div style="left:126.1px;top:210.0px;width:17px;height:17px;border-radius:50%;background:#b4c489;color:#fff;font:bold 12px 'Liberation Sans', sans-serif;line-height:17px;text-align:center">!</div>
<div style="left:151.9px;top:210.0px;width:17px;height:17px;border-radius:50%;background:#b4c489;color:#fff;font:bold 12px 'Liberation Sans', sans-serif;line-height:17px;text-align:center">?</div>
<div style="left:186px;top:202px;width:125px;height:31px;background:#e5e5e5;border:1px solid #ccc;border-bottom:none;box-sizing:border-box;"></div>
<div style="left:196px;top:210.87px;font-family:'Liberation Sans', sans-serif;font-size:13px;line-height:16.25px;color:#555;white-space:pre;font-weight:bold;font-size:12.6px;">Template</div>
<div style="left:257.3px;top:210.0px;width:17px;height:17px;border-radius:50%;background:#d4d4d4;color:#fff;font:bold 12px 'Liberation Sans', sans-serif;line-height:17px;text-align:center">!</div>
<div style="left:283.5px;top:210.0px;width:17px;height:17px;border-radius:50%;background:#d4d4d4;color:#fff;font:bold 12px 'Liberation Sans', sans-serif;line-height:17px;text-align:center">?</div>
<div style="left:317px;top:202px;width:101px;height:31px;background:#e5e5e5;border:1px solid #ccc;border-bottom:none;box-sizing:border-box;"></div>
<div style="left:328px;top:210.87px;font-family:'Liberation Sans', sans-serif;font-size:13px;line-height:16.25px;color:#555;white-space:pre;font-weight:bold;font-size:12.6px;">Style</div>
<div style="left:364.5px;top:210.0px;width:17px;height:17px;border-radius:50%;background:#d4d4d4;color:#fff;font:bold 12px 'Liberation Sans', sans-serif;line-height:17px;text-align:center">!</div>
<div style="left:390.5px;top:210.0px;width:17px;height:17px;border-radius:50%;background:#d4d4d4;color:#fff;font:bold 12px 'Liberation Sans', sans-serif;line-height:17px;text-align:center">?</div>
<div style="left:445px;top:212.67px;font-family:'Liberation Sans', sans-serif;font-size:13px;line-height:16.25px;color:#f00;white-space:pre;font-size:12.5px;">Template: [ Contact ]</div>
<div style="left:572.5px;top:212.67px;font-family:'Liberation Sans', sans-serif;font-size:13px;line-height:16.25px;color:#f00;white-space:pre;font-size:12.5px;letter-spacing:-0.22px;">Style: [ Bacall (Pro) ]</div>
<div style="left:742px;top:202px;width:109px;height:31px;background:#e5e5e5;border:1px solid #ccc;border-bottom:none;box-sizing:border-box;"></div>
<div style="left:751.5px;top:210.87px;font-family:'Liberation Sans', sans-serif;font-size:13px;line-height:16.25px;color:#555;white-space:pre;font-weight:bold;font-size:12.6px;">Getting Started</div>
<div style="left:857.5px;top:202px;width:70px;height:31px;background:#e5e5e5;border:1px solid #ccc;border-bottom:none;box-sizing:border-box;"></div>
<div style="left:867px;top:210.87px;font-family:'Liberation Sans', sans-serif;font-size:13px;line-height:16.25px;color:#555;white-space:pre;font-weight:bold;font-size:12.6px;">Add-ons</div>
<div style="left:60px;top:233px;width:892px;height:623px;background:#d3e299;"></div>
<div style="left:78px;top:252px;width:94px;height:30px;border:1px solid #9daa6f;border-radius:3px;box-sizing:border-box;"></div>
<svg style="position:absolute;left:90px;top:259px;width:11px;height:15px" viewBox="0 0 11 15"><path d="M0 0h7l4 4v11H0z" fill="#666"/><path d="M4 7L2.5 9 4 11M7 7l1.5 2L7 11" stroke="#d3e299" stroke-width="1" fill="none"/></svg>
<div style="left:105.5px;top:260.34px;font-family:'Liberation Sans', sans-serif;font-size:12px;line-height:15.0px;color:#555;white-space:pre;font-size:11.3px;letter-spacing:-0.1px;">Visual Data</div>
<div style="left:185.5px;top:252px;width:108px;height:30px;border:1px solid #9daa6f;border-radius:3px;box-sizing:border-box;"></div>
<svg style="position:absolute;left:196px;top:258px;width:17px;height:17px" viewBox="0 0 17 17"><rect x="7" y="0" width="3" height="17" fill="#666" transform="rotate(0 8.5 8.5)"/><rect x="7" y="0" width="3" height="17" fill="#666" transform="rotate(45 8.5 8.5)"/><rect x="7" y="0" width="3" height="17" fill="#666" transform="rotate(90 8.5 8.5)"/><rect x="7" y="0" width="3" height="17" fill="#666" transform="rotate(135 8.5 8.5)"/><circle cx="8.5" cy="8.5" r="6" fill="#666"/><circle cx="8.5" cy="8.5" r="2.5" fill="#d3e299"/></svg>
<div style="left:214px;top:260.34px;font-family:'Liberation Sans', sans-serif;font-size:12px;line-height:15.0px;color:#555;white-space:pre;font-size:11.5px;">Form Options</div>
<div style="left:78px;top:295px;width:110px;height:33px;background:#95a06a;"></div>
<div style="left:191px;top:294.5px;width:110px;height:33.5px;background:#fff;"></div>
<div style="left:304px;top:298px;width:111px;height:30px;background:#95a06a;"></div>
<svg style="position:absolute;left:314px;top:307px;width:14px;height:11px" viewBox="0 0 14 11"><path d="M5 1L1 5.5 5 10M9 1l4 4.5L9 10" stroke="#b9c98c" stroke-width="1.6" fill="none"/></svg>
<div style="left:339px;top:306.84px;font-family:'Liberation Sans', sans-serif;font-size:12px;line-height:15.0px;color:#f4f4f4;white-space:pre;font-size:11.5px;letter-spacing:-0.2px;">Tab 3</div>
<svg style="position:absolute;left:369px;top:307px;width:11px;height:11px" viewBox="0 0 11 11"><path d="M1.5 1.5l8 8M9.5 1.5l-8 8" stroke="#e8e8e8" stroke-width="2.6"/></svg>
<div style="left:386px;top:310.5px;width:12px;height:2.6px;background:#eee;"></div>
<div style="left:390.7px;top:305.8px;width:2.6px;height:12px;background:#eee;"></div>
<div style="left:609.5px;top:298.5px;width:19px;height:21px;background:#fff;border:1px solid #8c8c8c;border-radius:3px;box-sizing:border-box;"></div>
<svg style="position:absolute;left:615px;top:303px;width:8px;height:12px" viewBox="0 0 8 12"><path d="M6.5 1L1.5 6l5 5" stroke="#333" stroke-width="1.6" fill="none"/></svg>
<div style="left:649px;top:298.5px;width:19px;height:21px;background:#fff;border:1px solid #8c8c8c;border-radius:3px;box-sizing:border-box;"></div>
<svg style="position:absolute;left:655px;top:303px;width:8px;height:12px" viewBox="0 0 8 12"><path d="M1.5 1l5 5-5 5" stroke="#333" stroke-width="1.6" fill="none"/></svg>
<div style="left:273px;top:310.8px;width:12.5px;height:2.4px;background:#50555a;"></div>
<div style="left:277.8px;top:306px;width:2.4px;height:12px;background:#50555a;"></div>
<div style="left:78px;top:328px;width:590px;height:528px;background:#a0c4e8;"></div>
<div style="left:114.275px;top:382px;width:1.25px;height:474px;background:#5b7b9c;"></div>
<div style="left:153.775px;top:392.5px;width:1.25px;height:28.5px;background:#5b7b9c;"></div>
<div style="left:153.775px;top:437px;width:1.25px;height:419px;background:#5b7b9c;"></div>
<div style="left:193.175px;top:447.8px;width:1.25px;height:368.99999999999994px;background:#5b7b9c;"></div>
<div style="left:106.80px;top:365.90px;width:16.2px;height:16.2px;border:1.35px solid #5b7b9c;border-radius:50%;box-sizing:border-box;background:#a0c4e8"></div>
<div style="left:111.10000000000001px;top:373.2px;width:7.6px;height:1.6px;background:#6e8eae;"></div>
<div style="left:122.9px;top:373.3px;width:12.400000000000006px;height:1.4px;background:#5b7b9c;"></div>
<div style="left:146.30px;top:421.25px;width:16.2px;height:16.2px;border:1.35px solid #5b7b9c;border-radius:50%;box-sizing:border-box;background:#a0c4e8"></div>
<div style="left:150.6px;top:428.54999999999995px;width:7.6px;height:1.6px;background:#6e8eae;"></div>
<div style="left:162.4px;top:428.65px;width:12.0px;height:1.4px;background:#5b7b9c;"></div>
<div style="left:185.70px;top:476.60px;width:16.2px;height:16.2px;border:1.35px solid #5b7b9c;border-radius:50%;box-sizing:border-box;background:#a0c4e8"></div>
<div style="left:190.0px;top:483.9px;width:7.6px;height:1.6px;background:#6e8eae;"></div>
<div style="left:201.8px;top:484.0px;width:11.399999999999977px;height:1.4px;background:#5b7b9c;"></div>
<div style="left:232.875px;top:503.45px;width:1.25px;height:36.599999999999994px;background:#5b7b9c;"></div>
<div style="left:232.875px;top:539.425px;width:20.125px;height:1.25px;background:#5b7b9c;"></div>
<div style="left:185.70px;top:587.30px;width:16.2px;height:16.2px;border:1.35px solid #5b7b9c;border-radius:50%;box-sizing:border-box;background:#a0c4e8"></div>
<div style="left:190.0px;top:594.6px;width:7.6px;height:1.6px;background:#6e8eae;"></div>
<div style="left:201.8px;top:594.6999999999999px;width:11.399999999999977px;height:1.4px;background:#5b7b9c;"></div>
<div style="left:232.875px;top:614.15px;width:1.25px;height:36.599999999999994px;background:#5b7b9c;"></div>
<div style="left:232.875px;top:650.125px;width:20.125px;height:1.25px;background:#5b7b9c;"></div>
<div style="left:185.70px;top:698.00px;width:16.2px;height:16.2px;border:1.35px solid #5b7b9c;border-radius:50%;box-sizing:border-box;background:#a0c4e8"></div>
<div style="left:190.0px;top:705.3000000000001px;width:7.6px;height:1.6px;background:#6e8eae;"></div>
<div style="left:201.8px;top:705.4px;width:11.399999999999977px;height:1.4px;background:#5b7b9c;"></div>
<div style="left:232.875px;top:724.8499999999999px;width:1.25px;height:36.599999999999994px;background:#5b7b9c;"></div>
<div style="left:232.875px;top:760.8249999999999px;width:20.125px;height:1.25px;background:#5b7b9c;"></div>
<div style="left:185.70px;top:808.70px;width:16.2px;height:16.2px;border:1.35px solid #5b7b9c;border-radius:50%;box-sizing:border-box;background:#a0c4e8"></div>
<div style="left:190.0px;top:816.0px;width:7.6px;height:1.6px;background:#6e8eae;"></div>
<div style="left:201.8px;top:816.0999999999999px;width:11.399999999999977px;height:1.4px;background:#5b7b9c;"></div>
<div style="left:232.875px;top:835.55px;width:1.25px;height:36.599999999999994px;background:#5b7b9c;"></div>
<div style="left:232.875px;top:871.525px;width:20.125px;height:1.25px;background:#5b7b9c;"></div>
<div style="left:135.3px;top:355.6px;width:282.3px;height:37px;background:#96c0e4;border:1px solid #8cb2d8;border-radius:2px;box-sizing:border-box;"></div>
<div style="left:135.3px;top:355.6px;width:38.5px;height:37px;background:#95b8dd;border:1px solid #8cb2d8;border-radius:2px 0 0 2px;box-sizing:border-box;"></div>
<div style="left:148.8px;top:368.40000000000003px;width:13px;height:1.9px;background:#acc8e6;"></div>
<div style="left:148.8px;top:373.90000000000003px;width:13px;height:1.9px;background:#acc8e6;"></div>
<div style="left:148.8px;top:379.40000000000003px;width:13px;height:1.9px;background:#acc8e6;"></div>
<svg style="position:absolute;left:184.3px;top:368.6px;width:14px;height:12px" viewBox="0 0 14 12"><path d="M1 2h4l1 1.5h7V11H1z" stroke="#7ba0c3" stroke-width="1.3" fill="none"/><path d="M1 5h12" stroke="#7ba0c3" stroke-width="1"/></svg>
<div style="left:209.8px;top:367.94px;font-family:'Liberation Sans', sans-serif;font-size:12px;line-height:15.0px;color:#7ba0c3;white-space:pre;font-size:11.5px;">Your Details</div>
<div style="left:290.3px;top:367.44px;font-family:'Liberation Sans', sans-serif;font-size:12px;line-height:15.0px;color:#7ba0c3;white-space:pre;font-size:11.2px;letter-spacing:-0.45px;">FIELDSET</div>
<svg style="position:absolute;left:348.0px;top:366.3px;width:15px;height:15px" viewBox="0 0 15 15"><rect x="0" y="2" width="9.8" height="13" fill="#7398bd"/><path d="M5.2 10.2L13 2.4" stroke="#96c0e4" stroke-width="4"/><path d="M5.8 9.6L13.2 2.2" stroke="#7398bd" stroke-width="2.2"/></svg>
<svg style="position:absolute;left:370.0px;top:367.1px;width:13px;height:14px" viewBox="0 0 13 14"><rect x="3" y="0" width="8.6" height="11.2" fill="#7398bd"/><path d="M.8 3v10h8.6" stroke="#7398bd" stroke-width="1.5" fill="none"/></svg>
<svg style="position:absolute;left:391.8px;top:366.9px;width:14.4px;height:14.4px" viewBox="0 0 14 14"><circle cx="7" cy="7" r="7" fill="#7398bd"/><path d="M3.9 3.9l6.2 6.2M10.1 3.9l-6.2 6.2" stroke="#96c0e4" stroke-width="2.4"/></svg>
<div style="left:174.4px;top:410.95px;width:297.3px;height:37px;background:#96c0e4;border:1px solid #8cb2d8;border-radius:2px;box-sizing:border-box;"></div>
<div style="left:174.4px;top:410.95px;width:38.5px;height:37px;background:#95b8dd;border:1px solid #8cb2d8;border-radius:2px 0 0 2px;box-sizing:border-box;"></div>
<div style="left:187.9px;top:423.75px;width:13px;height:1.9px;background:#acc8e6;"></div>
<div style="left:187.9px;top:429.25px;width:13px;height:1.9px;background:#acc8e6;"></div>
<div style="left:187.9px;top:434.75px;width:13px;height:1.9px;background:#acc8e6;"></div>
<svg style="position:absolute;left:225.9px;top:422.9px;width:13px;height:12px" viewBox="0 0 13 12"><path d="M1 1v2M1 5v2M1 9v2" stroke="#7ba0c3" stroke-width="0.9"/><path d="M4 2h8M4 6h8M4 10h8" stroke="#7ba0c3" stroke-width="1.3"/></svg>
<div style="left:329.70000000000005px;top:422.79px;font-family:'Liberation Sans', sans-serif;font-size:12px;line-height:15.0px;color:#7ba0c3;white-space:pre;font-size:11.4px;letter-spacing:-0.4px;">LIST-OL</div>
<svg style="position:absolute;left:380.4px;top:421.6px;width:15px;height:15px" viewBox="0 0 15 15"><rect x="0" y="2" width="9.8" height="13" fill="#7398bd"/><path d="M5.2 10.2L13 2.4" stroke="#96c0e4" stroke-width="4"/><path d="M5.8 9.6L13.2 2.2" stroke="#7398bd" stroke-width="2.2"/></svg>
<svg style="position:absolute;left:402.4px;top:422.4px;width:13px;height:14px" viewBox="0 0 13 14"><rect x="3" y="0" width="8.6" height="11.2" fill="#7398bd"/><path d="M.8 3v10h8.6" stroke="#7398bd" stroke-width="1.5" fill="none"/></svg>
<svg style="position:absolute;left:424.2px;top:422.2px;width:14.4px;height:14.4px" viewBox="0 0 14 14"><circle cx="7" cy="7" r="7" fill="#7398bd"/><path d="M3.9 3.9l6.2 6.2M10.1 3.9l-6.2 6.2" stroke="#96c0e4" stroke-width="2.4"/></svg>
<svg style="position:absolute;left:446.8px;top:425.9px;width:13px;height:8px" viewBox="0 0 13 8"><path d="M1 1l5.5 5.5L12 1" stroke="#7398bd" stroke-width="1.4" fill="none"/></svg>
<div style="left:213.2px;top:466.3px;width:292.3px;height:37px;background:#96c0e4;border:1px solid #8cb2d8;border-radius:2px;box-sizing:border-box;"></div>
<div style="left:213.2px;top:466.3px;width:38.5px;height:37px;background:#95b8dd;border:1px solid #8cb2d8;border-radius:2px 0 0 2px;box-sizing:border-box;"></div>
<div style="left:226.7px;top:479.1px;width:13px;height:1.9px;background:#acc8e6;"></div>
<div style="left:226.7px;top:484.6px;width:13px;height:1.9px;background:#acc8e6;"></div>
<div style="left:226.7px;top:490.1px;width:13px;height:1.9px;background:#acc8e6;"></div>
<svg style="position:absolute;left:264.7px;top:478.3px;width:13px;height:12px" viewBox="0 0 13 12"><circle cx="1.3" cy="2" r="1.2" fill="#7ba0c3"/><circle cx="1.3" cy="6" r="1.2" fill="#7ba0c3"/><circle cx="1.3" cy="10" r="1.2" fill="#7ba0c3"/><path d="M4 2h8M4 6h8M4 10h8" stroke="#7ba0c3" stroke-width="1.3"/></svg>
<div style="left:368.6px;top:478.14px;font-family:'Liberation Sans', sans-serif;font-size:12px;line-height:15.0px;color:#7ba0c3;white-space:pre;font-size:11.4px;letter-spacing:-0.4px;">LIST-LI</div>
<svg style="position:absolute;left:414.2px;top:477.0px;width:15px;height:15px" viewBox="0 0 15 15"><rect x="0" y="2" width="9.8" height="13" fill="#7398bd"/><path d="M5.2 10.2L13 2.4" stroke="#96c0e4" stroke-width="4"/><path d="M5.8 9.6L13.2 2.2" stroke="#7398bd" stroke-width="2.2"/></svg>
<svg style="position:absolute;left:436.2px;top:477.8px;width:13px;height:14px" viewBox="0 0 13 14"><rect x="3" y="0" width="8.6" height="11.2" fill="#7398bd"/><path d="M.8 3v10h8.6" stroke="#7398bd" stroke-width="1.5" fill="none"/></svg>
<svg style="position:absolute;left:458.0px;top:477.6px;width:14.4px;height:14.4px" viewBox="0 0 14 14"><circle cx="7" cy="7" r="7" fill="#7398bd"/><path d="M3.9 3.9l6.2 6.2M10.1 3.9l-6.2 6.2" stroke="#96c0e4" stroke-width="2.4"/></svg>
<svg style="position:absolute;left:480.6px;top:481.3px;width:13px;height:8px" viewBox="0 0 13 8"><path d="M1 1l5.5 5.5L12 1" stroke="#7398bd" stroke-width="1.4" fill="none"/></svg>
<div style="left:253px;top:521.65px;width:344.6px;height:37px;background:#8fc0cf;border:1px solid #8cb2d8;border-radius:2px;box-sizing:border-box;"></div>
<div style="left:253px;top:521.65px;width:38.5px;height:37px;background:#95b8dd;border:1px solid #8cb2d8;border-radius:2px 0 0 2px;box-sizing:border-box;"></div>
<div style="left:266.5px;top:534.4499999999999px;width:13px;height:1.9px;background:#acc8e6;"></div>
<div style="left:266.5px;top:539.9499999999999px;width:13px;height:1.9px;background:#acc8e6;"></div>
<div style="left:266.5px;top:545.4499999999999px;width:13px;height:1.9px;background:#acc8e6;"></div>
<svg style="position:absolute;left:302.5px;top:536.6px;width:16px;height:12px" viewBox="0 0 16 12"><text x="0" y="9.5" font-size="9" font-weight="bold" font-family="Liberation Sans" fill="#7ba0c3" letter-spacing="-0.5">A-Z</text></svg>
<div style="left:328px;top:533.79px;font-family:'Liberation Sans', sans-serif;font-size:12px;line-height:15.0px;color:#7ba0c3;white-space:pre;font-size:11.5px;">Name</div>
<div style="left:408px;top:525.65px;width:86px;height:29.3px;border:1.3px solid #7398bd;border-radius:3px;box-sizing:border-box;"></div>
<div style="left:409.5px;top:532.58px;font-family:'Liberation Sans', sans-serif;font-size:15px;line-height:18.75px;color:#7398bd;white-space:pre;font-size:13.6px;letter-spacing:-0.5px;">TEXT</div>
<svg style="position:absolute;left:477.0px;top:539.1px;width:10px;height:6px" viewBox="0 0 10 6"><path d="M1 1l4 4 4-4" stroke="#7398bd" stroke-width="1.4" fill="none"/></svg>
<svg style="position:absolute;left:506.3px;top:527.5px;width:15px;height:15px" viewBox="0 0 15 15"><rect x="0" y="2" width="9.8" height="13" fill="#7398bd"/><path d="M5.2 10.2L13 2.4" stroke="#8fc0cf" stroke-width="4"/><path d="M5.8 9.6L13.2 2.2" stroke="#7398bd" stroke-width="2.2"/></svg>
<svg style="position:absolute;left:528.3px;top:528.2px;width:13px;height:14px" viewBox="0 0 13 14"><rect x="3" y="0" width="8.6" height="11.2" fill="#7398bd"/><path d="M.8 3v10h8.6" stroke="#7398bd" stroke-width="1.5" fill="none"/></svg>
<svg style="position:absolute;left:550.1px;top:528.0px;width:14.4px;height:14.4px" viewBox="0 0 14 14"><circle cx="7" cy="7" r="7" fill="#7398bd"/><path d="M3.9 3.9l6.2 6.2M10.1 3.9l-6.2 6.2" stroke="#8fc0cf" stroke-width="2.4"/></svg>
<svg style="position:absolute;left:572.7px;top:531.8px;width:13px;height:8px" viewBox="0 0 13 8"><path d="M1 1l5.5 5.5L12 1" stroke="#7398bd" stroke-width="1.4" fill="none"/></svg>
<div style="left:213.2px;top:577.0px;width:292.3px;height:37px;background:#96c0e4;border:1px solid #8cb2d8;border-radius:2px;box-sizing:border-box;"></div>
<div style="left:213.2px;top:577.0px;width:38.5px;height:37px;background:#95b8dd;border:1px solid #8cb2d8;border-radius:2px 0 0 2px;box-sizing:border-box;"></div>
<div style="left:226.7px;top:589.8px;width:13px;height:1.9px;background:#acc8e6;"></div>
<div style="left:226.7px;top:595.3px;width:13px;height:1.9px;background:#acc8e6;"></div>
<div style="left:226.7px;top:600.8px;width:13px;height:1.9px;background:#acc8e6;"></div>
<svg style="position:absolute;left:264.7px;top:589.0px;width:13px;height:12px" viewBox="0 0 13 12"><circle cx="1.3" cy="2" r="1.2" fill="#7ba0c3"/><circle cx="1.3" cy="6" r="1.2" fill="#7ba0c3"/><circle cx="1.3" cy="10" r="1.2" fill="#7ba0c3"/><path d="M4 2h8M4 6h8M4 10h8" stroke="#7ba0c3" stroke-width="1.3"/></svg>
<div style="left:368.6px;top:588.84px;font-family:'Liberation Sans', sans-serif;font-size:12px;line-height:15.0px;color:#7ba0c3;white-space:pre;font-size:11.4px;letter-spacing:-0.4px;">LIST-LI</div>
<svg style="position:absolute;left:414.2px;top:587.7px;width:15px;height:15px" viewBox="0 0 15 15"><rect x="0" y="2" width="9.8" height="13" fill="#7398bd"/><path d="M5.2 10.2L13 2.4" stroke="#96c0e4" stroke-width="4"/><path d="M5.8 9.6L13.2 2.2" stroke="#7398bd" stroke-width="2.2"/></svg>
<svg style="position:absolute;left:436.2px;top:588.5px;width:13px;height:14px" viewBox="0 0 13 14"><rect x="3" y="0" width="8.6" height="11.2" fill="#7398bd"/><path d="M.8 3v10h8.6" stroke="#7398bd" stroke-width="1.5" fill="none"/></svg>
<svg style="position:absolute;left:458.0px;top:588.3px;width:14.4px;height:14.4px" viewBox="0 0 14 14"><circle cx="7" cy="7" r="7" fill="#7398bd"/><path d="M3.9 3.9l6.2 6.2M10.1 3.9l-6.2 6.2" stroke="#96c0e4" stroke-width="2.4"/></svg>
<svg style="position:absolute;left:480.6px;top:592.0px;width:13px;height:8px" viewBox="0 0 13 8"><path d="M1 1l5.5 5.5L12 1" stroke="#7398bd" stroke-width="1.4" fill="none"/></svg>
<div style="left:253px;top:632.35px;width:344.6px;height:37px;background:#8fc0cf;border:1px solid #8cb2d8;border-radius:2px;box-sizing:border-box;"></div>
<div style="left:253px;top:632.35px;width:38.5px;height:37px;background:#95b8dd;border:1px solid #8cb2d8;border-radius:2px 0 0 2px;box-sizing:border-box;"></div>
<div style="left:266.5px;top:645.15px;width:13px;height:1.9px;background:#acc8e6;"></div>
<div style="left:266.5px;top:650.65px;width:13px;height:1.9px;background:#acc8e6;"></div>
<div style="left:266.5px;top:656.15px;width:13px;height:1.9px;background:#acc8e6;"></div>
<svg style="position:absolute;left:302.5px;top:647.4px;width:16px;height:12px" viewBox="0 0 16 12"><rect x="0.7" y="1.7" width="13" height="9" fill="none" stroke="#7ba0c3" stroke-width="1.2"/><path d="M1 2.5l6 4 6-4M1 10l4.5-4M13.5 10L9 6" stroke="#7ba0c3" stroke-width="1" fill="none"/></svg>
<div style="left:328px;top:644.49px;font-family:'Liberation Sans', sans-serif;font-size:12px;line-height:15.0px;color:#7ba0c3;white-space:pre;font-size:11.5px;">Email</div>
<div style="left:408px;top:636.35px;width:86px;height:29.3px;border:1.3px solid #7398bd;border-radius:3px;box-sizing:border-box;"></div>
<div style="left:409.5px;top:643.28px;font-family:'Liberation Sans', sans-serif;font-size:15px;line-height:18.75px;color:#7398bd;white-space:pre;font-size:13.6px;letter-spacing:-0.5px;">EMAIL*</div>
<svg style="position:absolute;left:477.0px;top:649.9px;width:10px;height:6px" viewBox="0 0 10 6"><path d="M1 1l4 4 4-4" stroke="#7398bd" stroke-width="1.4" fill="none"/></svg>
<svg style="position:absolute;left:506.3px;top:638.2px;width:15px;height:15px" viewBox="0 0 15 15"><rect x="0" y="2" width="9.8" height="13" fill="#7398bd"/><path d="M5.2 10.2L13 2.4" stroke="#8fc0cf" stroke-width="4"/><path d="M5.8 9.6L13.2 2.2" stroke="#7398bd" stroke-width="2.2"/></svg>
<svg style="position:absolute;left:528.3px;top:639.0px;width:13px;height:14px" viewBox="0 0 13 14"><rect x="3" y="0" width="8.6" height="11.2" fill="#7398bd"/><path d="M.8 3v10h8.6" stroke="#7398bd" stroke-width="1.5" fill="none"/></svg>
<svg style="position:absolute;left:550.1px;top:638.8px;width:14.4px;height:14.4px" viewBox="0 0 14 14"><circle cx="7" cy="7" r="7" fill="#7398bd"/><path d="M3.9 3.9l6.2 6.2M10.1 3.9l-6.2 6.2" stroke="#8fc0cf" stroke-width="2.4"/></svg>
<svg style="position:absolute;left:572.7px;top:642.5px;width:13px;height:8px" viewBox="0 0 13 8"><path d="M1 1l5.5 5.5L12 1" stroke="#7398bd" stroke-width="1.4" fill="none"/></svg>
<div style="left:213.2px;top:687.7px;width:292.3px;height:37px;background:#96c0e4;border:1px solid #8cb2d8;border-radius:2px;box-sizing:border-box;"></div>
<div style="left:213.2px;top:687.7px;width:38.5px;height:37px;background:#95b8dd;border:1px solid #8cb2d8;border-radius:2px 0 0 2px;box-sizing:border-box;"></div>
<div style="left:226.7px;top:700.5px;width:13px;height:1.9px;background:#acc8e6;"></div>
<div style="left:226.7px;top:706.0px;width:13px;height:1.9px;background:#acc8e6;"></div>
<div style="left:226.7px;top:711.5px;width:13px;height:1.9px;background:#acc8e6;"></div>
<svg style="position:absolute;left:264.7px;top:699.7px;width:13px;height:12px" viewBox="0 0 13 12"><circle cx="1.3" cy="2" r="1.2" fill="#7ba0c3"/><circle cx="1.3" cy="6" r="1.2" fill="#7ba0c3"/><circle cx="1.3" cy="10" r="1.2" fill="#7ba0c3"/><path d="M4 2h8M4 6h8M4 10h8" stroke="#7ba0c3" stroke-width="1.3"/></svg>
<div style="left:368.6px;top:699.54px;font-family:'Liberation Sans', sans-serif;font-size:12px;line-height:15.0px;color:#7ba0c3;white-space:pre;font-size:11.4px;letter-spacing:-0.4px;">LIST-LI</div>
<svg style="position:absolute;left:414.2px;top:698.4px;width:15px;height:15px" viewBox="0 0 15 15"><rect x="0" y="2" width="9.8" height="13" fill="#7398bd"/><path d="M5.2 10.2L13 2.4" stroke="#96c0e4" stroke-width="4"/><path d="M5.8 9.6L13.2 2.2" stroke="#7398bd" stroke-width="2.2"/></svg>
<svg style="position:absolute;left:436.2px;top:699.2px;width:13px;height:14px" viewBox="0 0 13 14"><rect x="3" y="0" width="8.6" height="11.2" fill="#7398bd"/><path d="M.8 3v10h8.6" stroke="#7398bd" stroke-width="1.5" fill="none"/></svg>
<svg style="position:absolute;left:458.0px;top:699.0px;width:14.4px;height:14.4px" viewBox="0 0 14 14"><circle cx="7" cy="7" r="7" fill="#7398bd"/><path d="M3.9 3.9l6.2 6.2M10.1 3.9l-6.2 6.2" stroke="#96c0e4" stroke-width="2.4"/></svg>
<svg style="position:absolute;left:480.6px;top:702.7px;width:13px;height:8px" viewBox="0 0 13 8"><path d="M1 1l5.5 5.5L12 1" stroke="#7398bd" stroke-width="1.4" fill="none"/></svg>
<div style="left:253px;top:743.05px;width:344.6px;height:37px;background:#8fc0cf;border:1px solid #8cb2d8;border-radius:2px;box-sizing:border-box;"></div>
<div style="left:253px;top:743.05px;width:38.5px;height:37px;background:#95b8dd;border:1px solid #8cb2d8;border-radius:2px 0 0 2px;box-sizing:border-box;"></div>
<div style="left:266.5px;top:755.8499999999999px;width:13px;height:1.9px;background:#acc8e6;"></div>
<div style="left:266.5px;top:761.3499999999999px;width:13px;height:1.9px;background:#acc8e6;"></div>
<div style="left:266.5px;top:766.8499999999999px;width:13px;height:1.9px;background:#acc8e6;"></div>
<svg style="position:absolute;left:302.5px;top:758.0px;width:16px;height:12px" viewBox="0 0 16 12"><path d="M2 10.5c4 2 9-2 10-7.5l-2.5-1.5-1.5 2.5 1.2 1.2c-.8 1.8-2.5 3.5-4.5 4.2l-1.2-1z" fill="#7ba0c3"/></svg>
<div style="left:328px;top:755.19px;font-family:'Liberation Sans', sans-serif;font-size:12px;line-height:15.0px;color:#7ba0c3;white-space:pre;font-size:11.5px;">Phone</div>
<div style="left:408px;top:747.05px;width:86px;height:29.3px;border:1.3px solid #7398bd;border-radius:3px;box-sizing:border-box;"></div>
<div style="left:409.5px;top:753.98px;font-family:'Liberation Sans', sans-serif;font-size:15px;line-height:18.75px;color:#7398bd;white-space:pre;font-size:13.6px;letter-spacing:-0.5px;">TEL</div>
<svg style="position:absolute;left:477.0px;top:760.5px;width:10px;height:6px" viewBox="0 0 10 6"><path d="M1 1l4 4 4-4" stroke="#7398bd" stroke-width="1.4" fill="none"/></svg>
<svg style="position:absolute;left:506.3px;top:748.9px;width:15px;height:15px" viewBox="0 0 15 15"><rect x="0" y="2" width="9.8" height="13" fill="#7398bd"/><path d="M5.2 10.2L13 2.4" stroke="#8fc0cf" stroke-width="4"/><path d="M5.8 9.6L13.2 2.2" stroke="#7398bd" stroke-width="2.2"/></svg>
<svg style="position:absolute;left:528.3px;top:749.6px;width:13px;height:14px" viewBox="0 0 13 14"><rect x="3" y="0" width="8.6" height="11.2" fill="#7398bd"/><path d="M.8 3v10h8.6" stroke="#7398bd" stroke-width="1.5" fill="none"/></svg>
<svg style="position:absolute;left:550.1px;top:749.4px;width:14.4px;height:14.4px" viewBox="0 0 14 14"><circle cx="7" cy="7" r="7" fill="#7398bd"/><path d="M3.9 3.9l6.2 6.2M10.1 3.9l-6.2 6.2" stroke="#8fc0cf" stroke-width="2.4"/></svg>
<svg style="position:absolute;left:572.7px;top:753.1px;width:13px;height:8px" viewBox="0 0 13 8"><path d="M1 1l5.5 5.5L12 1" stroke="#7398bd" stroke-width="1.4" fill="none"/></svg>
<div style="left:213.2px;top:798.4px;width:292.3px;height:37px;background:#96c0e4;border:1px solid #8cb2d8;border-radius:2px;box-sizing:border-box;"></div>
<div style="left:213.2px;top:798.4px;width:38.5px;height:37px;background:#95b8dd;border:1px solid #8cb2d8;border-radius:2px 0 0 2px;box-sizing:border-box;"></div>
<div style="left:226.7px;top:811.1999999999999px;width:13px;height:1.9px;background:#acc8e6;"></div>
<div style="left:226.7px;top:816.6999999999999px;width:13px;height:1.9px;background:#acc8e6;"></div>
<div style="left:226.7px;top:822.1999999999999px;width:13px;height:1.9px;background:#acc8e6;"></div>
<svg style="position:absolute;left:264.7px;top:810.4px;width:13px;height:12px" viewBox="0 0 13 12"><circle cx="1.3" cy="2" r="1.2" fill="#7ba0c3"/><circle cx="1.3" cy="6" r="1.2" fill="#7ba0c3"/><circle cx="1.3" cy="10" r="1.2" fill="#7ba0c3"/><path d="M4 2h8M4 6h8M4 10h8" stroke="#7ba0c3" stroke-width="1.3"/></svg>
<div style="left:368.6px;top:810.24px;font-family:'Liberation Sans', sans-serif;font-size:12px;line-height:15.0px;color:#7ba0c3;white-space:pre;font-size:11.4px;letter-spacing:-0.4px;">LIST-LI</div>
<svg style="position:absolute;left:414.2px;top:809.1px;width:15px;height:15px" viewBox="0 0 15 15"><rect x="0" y="2" width="9.8" height="13" fill="#7398bd"/><path d="M5.2 10.2L13 2.4" stroke="#96c0e4" stroke-width="4"/><path d="M5.8 9.6L13.2 2.2" stroke="#7398bd" stroke-width="2.2"/></svg>
<svg style="position:absolute;left:436.2px;top:809.9px;width:13px;height:14px" viewBox="0 0 13 14"><rect x="3" y="0" width="8.6" height="11.2" fill="#7398bd"/><path d="M.8 3v10h8.6" stroke="#7398bd" stroke-width="1.5" fill="none"/></svg>
<svg style="position:absolute;left:458.0px;top:809.7px;width:14.4px;height:14.4px" viewBox="0 0 14 14"><circle cx="7" cy="7" r="7" fill="#7398bd"/><path d="M3.9 3.9l6.2 6.2M10.1 3.9l-6.2 6.2" stroke="#96c0e4" stroke-width="2.4"/></svg>
<svg style="position:absolute;left:480.6px;top:813.4px;width:13px;height:8px" viewBox="0 0 13 8"><path d="M1 1l5.5 5.5L12 1" stroke="#7398bd" stroke-width="1.4" fill="none"/></svg>
<div style="left:253px;top:853.75px;width:344.6px;height:37px;background:#8fc0cf;border:1px solid #8cb2d8;border-radius:2px;box-sizing:border-box;"></div>
<div style="left:253px;top:853.75px;width:38.5px;height:37px;background:#95b8dd;border:1px solid #8cb2d8;border-radius:2px 0 0 2px;box-sizing:border-box;"></div>
<div style="left:266.5px;top:866.55px;width:13px;height:1.9px;background:#acc8e6;"></div>
<div style="left:266.5px;top:872.05px;width:13px;height:1.9px;background:#acc8e6;"></div>
<div style="left:266.5px;top:877.55px;width:13px;height:1.9px;background:#acc8e6;"></div>
<svg style="position:absolute;left:506.3px;top:859.6px;width:15px;height:15px" viewBox="0 0 15 15"><rect x="0" y="2" width="9.8" height="13" fill="#7398bd"/><path d="M5.2 10.2L13 2.4" stroke="#8fc0cf" stroke-width="4"/><path d="M5.8 9.6L13.2 2.2" stroke="#7398bd" stroke-width="2.2"/></svg>
<svg style="position:absolute;left:528.3px;top:860.4px;width:13px;height:14px" viewBox="0 0 13 14"><rect x="3" y="0" width="8.6" height="11.2" fill="#7398bd"/><path d="M.8 3v10h8.6" stroke="#7398bd" stroke-width="1.5" fill="none"/></svg>
<svg style="position:absolute;left:550.1px;top:860.1px;width:14.4px;height:14.4px" viewBox="0 0 14 14"><circle cx="7" cy="7" r="7" fill="#7398bd"/><path d="M3.9 3.9l6.2 6.2M10.1 3.9l-6.2 6.2" stroke="#8fc0cf" stroke-width="2.4"/></svg>
<svg style="position:absolute;left:572.7px;top:863.9px;width:13px;height:8px" viewBox="0 0 13 8"><path d="M1 1l5.5 5.5L12 1" stroke="#7398bd" stroke-width="1.4" fill="none"/></svg>
<div style="left:78px;top:295px;width:201px;height:26px;background:#fff;border-radius:3px;box-shadow:0 1px 4px rgba(0,0,0,.25)"></div>
<svg style="position:absolute;left:87px;top:320px;width:16px;height:9px" viewBox="0 0 16 9"><path d="M0 0L8 8 16 0z" fill="#fff"/></svg>
<div style="left:85.5px;top:301.84px;font-family:'Liberation Sans', sans-serif;font-size:12px;line-height:15.0px;color:#000;white-space:pre;font-weight:bold;font-size:11.6px;letter-spacing:-0.1px;"><span style="color:#881280">div</span><span style="color:#1a1aa6">.resize-triggers</span></div>
<div style="left:192.5px;top:301.84px;font-family:'Liberation Sans', sans-serif;font-size:12px;line-height:15.0px;color:#707070;white-space:pre;font-size:11.4px;letter-spacing:-0.1px;">662.39 × 862.89</div>
<div style="left:686px;top:252px;width:248.5px;height:604px;background:#fff;"></div>
<div style="left:699.7px;top:278.43px;font-family:'Liberation Sans', sans-serif;font-size:15px;line-height:18.75px;color:#23282d;white-space:pre;font-size:14.5px;letter-spacing:-0.5px;">FIELDS (CF7 TAGS)</div>
<div style="left:892.6px;top:276px;width:28.2px;height:19px;background:#ddd;border:1px solid #d0d0d0;border-radius:2px;box-sizing:border-box;"></div>
<div style="left:903px;top:280.31px;font-family:'Liberation Sans', sans-serif;font-size:11px;line-height:13.75px;color:#fff;white-space:pre;font-size:11px;">?</div>
<div style="left:699.5px;top:314.8px;width:100.8px;height:49.3px;background:#f8f8f8;border:1px solid #ddd;border-radius:2px;box-sizing:border-box;"></div>
<svg style="position:absolute;left:708.5px;top:324.8px;width:15px;height:15px" viewBox="0 0 15 15"><path d="M1.5 10.5l3.5 3 2.5-1.5 3-.5a1.5 1.5 0 0 0 .3-3 1.5 1.5 0 0 0 .2-2.8 1.3 1.3 0 0 0-1-2.2H7.5l.8-2.3a1.2 1.2 0 0 0-2.2-.9L4 6z" fill="none" stroke="#1b74a6" stroke-width="1.2"/><path d="M1 10l3.5 3.5" stroke="#1b74a6" stroke-width="2.2"/></svg>
<div style="left:736.2px;top:325.86px;font-family:'Liberation Sans', sans-serif;font-size:12.5px;line-height:15.62px;color:#32373c;white-space:pre;font-size:12px;letter-spacing:-0.45px;">Acceptanc</div>
<div style="left:736.2px;top:341.86px;font-family:'Liberation Sans', sans-serif;font-size:12.5px;line-height:15.62px;color:#32373c;white-space:pre;font-size:12px;letter-spacing:-0.45px;">e (confirm)</div>
<div style="left:699.5px;top:374.8px;width:100.8px;height:33.3px;background:#f8f8f8;border:1px solid #ddd;border-radius:2px;box-sizing:border-box;"></div>
<svg style="position:absolute;left:708.5px;top:384.8px;width:15px;height:15px" viewBox="0 0 15 15"><path d="M2 5.5h9" stroke="#1b74a6" stroke-width="1.3"/><rect x="1" y="4" width="11" height="9" rx="1.2" fill="none" stroke="#1b74a6" stroke-width="1.3"/><path d="M2.5 4.5V2.5a1 1 0 0 1 2 0v2M8.5 4.5V2.5a1 1 0 0 1 2 0v2" stroke="#1b74a6" stroke-width="1.3" fill="none"/></svg>
<div style="left:736.2px;top:385.86px;font-family:'Liberation Sans', sans-serif;font-size:12.5px;line-height:15.62px;color:#32373c;white-space:pre;font-size:12px;letter-spacing:-0.45px;">Date</div>
<div style="left:699.5px;top:418.5px;width:100.8px;height:49.3px;background:#f8f8f8;border:1px solid #ddd;border-radius:2px;box-sizing:border-box;"></div>
<svg style="position:absolute;left:708.5px;top:428.5px;width:15px;height:15px" viewBox="0 0 15 15"><path d="M9.5 3.5L4 9a1.2 1.2 0 0 0 1.7 1.7l5.3-5.3a2.2 2.2 0 0 0-3.1-3.1L2.6 7.6a3.3 3.3 0 0 0 4.6 4.6l3.8-3.8" fill="none" stroke="#1b74a6" stroke-width="1.2"/></svg>
<div style="left:736.2px;top:429.56px;font-family:'Liberation Sans', sans-serif;font-size:12.5px;line-height:15.62px;color:#32373c;white-space:pre;font-size:12px;letter-spacing:-0.45px;">File</div>
<div style="left:736.2px;top:445.56px;font-family:'Liberation Sans', sans-serif;font-size:12.5px;line-height:15.62px;color:#32373c;white-space:pre;font-size:12px;letter-spacing:-0.45px;">(upload)</div>
<div style="left:699.5px;top:478.5px;width:100.8px;height:33.3px;background:#f8f8f8;border:1px solid #ddd;border-radius:2px;box-sizing:border-box;"></div>
<svg style="position:absolute;left:708.5px;top:488.5px;width:15px;height:15px" viewBox="0 0 15 15"><path d="M6.5 1a4.5 4.5 0 0 1 2.5 8v2H4V9a4.5 4.5 0 0 1 2.5-8z" fill="none" stroke="#1b74a6" stroke-width="1.3"/><path d="M4.5 12.5h4M5 14h3" stroke="#1b74a6" stroke-width="1.2"/></svg>
<div style="left:736.2px;top:489.56px;font-family:'Liberation Sans', sans-serif;font-size:12.5px;line-height:15.62px;color:#32373c;white-space:pre;font-size:12px;letter-spacing:-0.45px;">Quiz</div>
<div style="left:699.5px;top:522px;width:100.8px;height:65.3px;background:#f8f8f8;border:1px solid #ddd;border-radius:2px;box-sizing:border-box;"></div>
<svg style="position:absolute;left:708.5px;top:532.0px;width:15px;height:15px" viewBox="0 0 15 15"><path d="M1 3h11M1 7h11M1 11h11" stroke="#1b74a6" stroke-width="2.2"/></svg>
<div style="left:736.2px;top:533.06px;font-family:'Liberation Sans', sans-serif;font-size:12.5px;line-height:15.62px;color:#32373c;white-space:pre;font-size:12px;letter-spacing:-0.45px;">Select</div>
<div style="left:736.2px;top:549.06px;font-family:'Liberation Sans', sans-serif;font-size:12.5px;line-height:15.62px;color:#32373c;white-space:pre;font-size:12px;letter-spacing:-0.45px;">(dropdow</div>
<div style="left:736.2px;top:565.06px;font-family:'Liberation Sans', sans-serif;font-size:12.5px;line-height:15.62px;color:#32373c;white-space:pre;font-size:12px;letter-spacing:-0.45px;">n)</div>
<div style="left:699.5px;top:598px;width:100.8px;height:33.3px;background:#f8f8f8;border:1px solid #ddd;border-radius:2px;box-sizing:border-box;"></div>
<svg style="position:absolute;left:708.5px;top:608.0px;width:15px;height:15px" viewBox="0 0 15 15"><path d="M1.5 12.5c1.5 1.3 4 .6 6.5-1.6s4.5-5.2 3.9-7.3L9.9 2 8.3 4.6l1.1 1.3c-.6 1.4-2.2 3.2-3.6 3.9L4.6 8.6 2 10.2z" fill="#1b74a6"/></svg>
<div style="left:736.2px;top:609.06px;font-family:'Liberation Sans', sans-serif;font-size:12.5px;line-height:15.62px;color:#32373c;white-space:pre;font-size:12px;letter-spacing:-0.45px;">Telephone</div>
<div style="left:699.5px;top:641.5px;width:100.8px;height:49.3px;background:#f8f8f8;border:1px solid #ddd;border-radius:2px;box-sizing:border-box;"></div>
<svg style="position:absolute;left:708.5px;top:651.5px;width:15px;height:15px" viewBox="0 0 15 15"><rect x="1.5" y="1.5" width="10" height="12" rx="1" fill="none" stroke="#1b74a6" stroke-width="1.3"/><path d="M3.5 5h6M3.5 7.5h6M3.5 10h6" stroke="#1b74a6" stroke-width="1"/></svg>
<div style="left:736.2px;top:652.56px;font-family:'Liberation Sans', sans-serif;font-size:12.5px;line-height:15.62px;color:#32373c;white-space:pre;font-size:12px;letter-spacing:-0.45px;">Textarea</div>
<div style="left:736.2px;top:668.56px;font-family:'Liberation Sans', sans-serif;font-size:12.5px;line-height:15.62px;color:#32373c;white-space:pre;font-size:12px;letter-spacing:-0.45px;">(long text)</div>
<div style="left:699.5px;top:701.3px;width:100.8px;height:49.3px;background:#f8f8f8;border:1px solid #ddd;border-radius:2px;box-sizing:border-box;"></div>
<svg style="position:absolute;left:708.5px;top:711.3px;width:15px;height:15px" viewBox="0 0 15 15"><path d="M2.3 7.5A4.8 4.8 0 0 1 10.8 4.2M11.7 6.5A4.8 4.8 0 0 1 3.2 9.8" stroke="#1b74a6" stroke-width="2.2" fill="none"/><path d="M8.3 5.3h4.4V1z" fill="#1b74a6"/><path d="M5.7 8.7H1.3V13z" fill="#1b74a6"/></svg>
<div style="left:736.2px;top:712.36px;font-family:'Liberation Sans', sans-serif;font-size:12.5px;line-height:15.62px;color:#32373c;white-space:pre;font-size:12px;letter-spacing:-0.45px;">reCAPTCH</div>
<div style="left:736.2px;top:728.36px;font-family:'Liberation Sans', sans-serif;font-size:12.5px;line-height:15.62px;color:#32373c;white-space:pre;font-size:12px;letter-spacing:-0.45px;">A</div>
<div style="left:819.3px;top:314.8px;width:100.8px;height:49.3px;background:#f8f8f8;border:1px solid #ddd;border-radius:2px;box-sizing:border-box;"></div>
<svg style="position:absolute;left:828.3px;top:324.8px;width:15px;height:15px" viewBox="0 0 15 15"><path d="M1.5 3.5h8M1.5 3.5v9h9V8" stroke="#1b74a6" stroke-width="1.6" fill="none"/><path d="M4 7l2.5 2.5L12 3" stroke="#1b74a6" stroke-width="1.8" fill="none"/></svg>
<div style="left:856.0px;top:325.86px;font-family:'Liberation Sans', sans-serif;font-size:12.5px;line-height:15.62px;color:#32373c;white-space:pre;font-size:12px;letter-spacing:-0.45px;">Checkbox</div>
<div style="left:856.0px;top:341.86px;font-family:'Liberation Sans', sans-serif;font-size:12.5px;line-height:15.62px;color:#32373c;white-space:pre;font-size:12px;letter-spacing:-0.45px;">(option)</div>
<div style="left:819.3px;top:374.8px;width:100.8px;height:33.3px;background:#f8f8f8;border:1px solid #ddd;border-radius:2px;box-sizing:border-box;"></div>
<svg style="position:absolute;left:828.3px;top:384.8px;width:15px;height:15px" viewBox="0 0 15 15"><rect x="1.5" y="4" width="11" height="8" rx=".8" fill="none" stroke="#1b74a6" stroke-width="1.2"/><path d="M2 4.8l5 3.5 5-3.5M2 11.3l3.5-3M12 11.3L8.5 8.3" stroke="#1b74a6" stroke-width=".9" fill="none"/></svg>
<div style="left:856.0px;top:385.86px;font-family:'Liberation Sans', sans-serif;font-size:12.5px;line-height:15.62px;color:#32373c;white-space:pre;font-size:12px;letter-spacing:-0.45px;">Email</div>
<div style="left:819.3px;top:418.5px;width:100.8px;height:33.3px;background:#f8f8f8;border:1px solid #ddd;border-radius:2px;box-sizing:border-box;"></div>
<svg style="position:absolute;left:828.3px;top:428.5px;width:15px;height:15px" viewBox="0 0 15 15"><text x="0" y="10.5" font-size="9" font-weight="bold" font-family="Liberation Sans" fill="#1b74a6" letter-spacing="-0.5">A-Z</text></svg>
<div style="left:856.0px;top:429.56px;font-family:'Liberation Sans', sans-serif;font-size:12.5px;line-height:15.62px;color:#32373c;white-space:pre;font-size:12px;letter-spacing:-0.45px;">Number</div>
<div style="left:819.3px;top:462.2px;width:100.8px;height:65.3px;background:#f8f8f8;border:1px solid #ddd;border-radius:2px;box-sizing:border-box;"></div>
<svg style="position:absolute;left:828.3px;top:472.2px;width:15px;height:15px" viewBox="0 0 15 15"><circle cx="6.5" cy="6.5" r="3.6" fill="none" stroke="#1b74a6" stroke-width="1.5"/></svg>
<div style="left:856.0px;top:473.26px;font-family:'Liberation Sans', sans-serif;font-size:12.5px;line-height:15.62px;color:#32373c;white-space:pre;font-size:12px;letter-spacing:-0.45px;">Radio</div>
<div style="left:856.0px;top:489.26px;font-family:'Liberation Sans', sans-serif;font-size:12.5px;line-height:15.62px;color:#32373c;white-space:pre;font-size:12px;letter-spacing:-0.45px;">Button</div>
<div style="left:856.0px;top:505.26px;font-family:'Liberation Sans', sans-serif;font-size:12.5px;line-height:15.62px;color:#32373c;white-space:pre;font-size:12px;letter-spacing:-0.45px;">(option)</div>
<div style="left:819.3px;top:538px;width:100.8px;height:33.3px;background:#f8f8f8;border:1px solid #ddd;border-radius:2px;box-sizing:border-box;"></div>
<svg style="position:absolute;left:828.3px;top:548.0px;width:15px;height:15px" viewBox="0 0 15 15"><rect x="1.5" y="4" width="11" height="8" rx=".8" fill="none" stroke="#1b74a6" stroke-width="1.2"/><path d="M2 4.8l5 3.5 5-3.5M2 11.3l3.5-3M12 11.3L8.5 8.3" stroke="#1b74a6" stroke-width=".9" fill="none"/></svg>
<div style="left:856.0px;top:549.06px;font-family:'Liberation Sans', sans-serif;font-size:12.5px;line-height:15.62px;color:#32373c;white-space:pre;font-size:12px;letter-spacing:-0.45px;">Submit</div>
<div style="left:819.3px;top:581.8px;width:100.8px;height:49.3px;background:#f8f8f8;border:1px solid #ddd;border-radius:2px;box-sizing:border-box;"></div>
<svg style="position:absolute;left:828.3px;top:591.8px;width:15px;height:15px" viewBox="0 0 15 15"><text x="0" y="10.5" font-size="9" font-weight="bold" font-family="Liberation Sans" fill="#1b74a6" letter-spacing="-0.5">A-Z</text></svg>
<div style="left:856.0px;top:592.86px;font-family:'Liberation Sans', sans-serif;font-size:12.5px;line-height:15.62px;color:#32373c;white-space:pre;font-size:12px;letter-spacing:-0.45px;">Text (short</div>
<div style="left:856.0px;top:608.86px;font-family:'Liberation Sans', sans-serif;font-size:12.5px;line-height:15.62px;color:#32373c;white-space:pre;font-size:12px;letter-spacing:-0.45px;">text)</div>
<div style="left:819.3px;top:641.5px;width:100.8px;height:65.3px;background:#f8f8f8;border:1px solid #ddd;border-radius:2px;box-sizing:border-box;"></div>
<svg style="position:absolute;left:828.3px;top:651.5px;width:15px;height:15px" viewBox="0 0 15 15"><path d="M8 3a2.5 2.5 0 0 1 3.5 3.5L9 9M5 4L2.5 6.5A2.5 2.5 0 0 0 6 10M4 9l5-5" fill="none" stroke="#1b74a6" stroke-width="1.4"/><path d="M11 1l-8 12" stroke="#1b74a6" stroke-width="1"/></svg>
<div style="left:856.0px;top:652.56px;font-family:'Liberation Sans', sans-serif;font-size:12.5px;line-height:15.62px;color:#32373c;white-space:pre;font-size:12px;letter-spacing:-0.45px;">URL</div>
<div style="left:856.0px;top:668.56px;font-family:'Liberation Sans', sans-serif;font-size:12.5px;line-height:15.62px;color:#32373c;white-space:pre;font-size:12px;letter-spacing:-0.45px;">(website</div>
<div style="left:856.0px;top:684.56px;font-family:'Liberation Sans', sans-serif;font-size:12.5px;line-height:15.62px;color:#32373c;white-space:pre;font-size:12px;letter-spacing:-0.45px;">link)</div>
<div style="left:700px;top:778.3px;width:221px;height:66.5px;border:2px solid #ff9700;border-radius:2px;box-sizing:border-box;"></div>
<svg style="position:absolute;left:710px;top:791px;width:13px;height:19px" viewBox="0 0 13 19"><path d="M6.5 0A6.2 6.2 0 0 1 10 11.5V14H3v-2.5A6.2 6.2 0 0 1 6.5 0z" fill="#ff9700"/><rect x="3" y="15" width="7" height="1.5" fill="#ff9700"/><path d="M3.5 17.5h6a3 3 0 0 1-6 0z" fill="#ff9700"/></svg>
<div style="left:737px;top:789.86px;font-family:'Liberation Sans', sans-serif;font-size:12.5px;line-height:15.62px;color:#32373c;white-space:pre;font-size:12.2px;letter-spacing:-0.28px;"><b>Tip:-</b> Progress bars make long</div>
<div style="left:737px;top:805.86px;font-family:'Liberation Sans', sans-serif;font-size:12.5px;line-height:15.62px;color:#32373c;white-space:pre;font-size:12.2px;letter-spacing:-0.28px;">forms feel less daunting. Add this</div>
<div style="left:737px;top:821.56px;font-family:'Liberation Sans', sans-serif;font-size:12.5px;line-height:15.62px;color:#32373c;white-space:pre;font-size:12.2px;letter-spacing:-0.28px;">in using  <span style="color:#ff9700;text-decoration:underline">CF7 Skins Multi.</span></div>
<div style="left:986px;top:100px;width:607px;height:756px;background:#fff;"></div>
<div style="left:986px;top:100px;width:1px;height:756px;background:#cbcbcb;"></div>
<div style="left:987px;top:100px;width:606px;height:23px;background:#f3f3f3;"></div>
<div style="left:987px;top:123px;width:606px;height:1px;background:#cbcdd1;"></div>
<svg style="position:absolute;left:995px;top:105px;width:14px;height:14px" viewBox="0 0 14 14"><path d="M5 12.5H1.5v-11h11V5" stroke="#6e6e6e" stroke-width="1.3" fill="none"/><path d="M6 6l7 2.5-3 1 2.5 2.5-1 1L9 10.5l-1 3z" fill="#6e6e6e"/></svg>
<svg style="position:absolute;left:1019px;top:104px;width:15px;height:16px" viewBox="0 0 15 16"><rect x="4.5" y="0.7" width="9.5" height="14.6" rx="1" fill="none" stroke="#6e6e6e" stroke-width="1.3"/><rect x="0.7" y="6" width="6" height="9.3" rx="0.8" fill="#f3f3f3" stroke="#6e6e6e" stroke-width="1.3"/></svg>
<div style="left:1042px;top:105px;width:1px;height:14px;background:#ccc;"></div>
<div style="left:1059px;top:106.31px;font-family:'Liberation Sans', sans-serif;font-size:11px;line-height:13.75px;color:#333;white-space:pre;font-size:10.6px;letter-spacing:-0.15px;">Elements</div>
<div style="left:1121.8px;top:106.31px;font-family:'Liberation Sans', sans-serif;font-size:11px;line-height:13.75px;color:#5a5a5a;white-space:pre;font-size:10.6px;letter-spacing:-0.15px;">Console</div>
<div style="left:1181px;top:106.31px;font-family:'Liberation Sans', sans-serif;font-size:11px;line-height:13.75px;color:#5a5a5a;white-space:pre;font-size:10.6px;letter-spacing:-0.15px;">Sources</div>
<div style="left:1239px;top:106.31px;font-family:'Liberation Sans', sans-serif;font-size:11px;line-height:13.75px;color:#5a5a5a;white-space:pre;font-size:10.6px;letter-spacing:-0.15px;">Network</div>
<div style="left:1301px;top:106.31px;font-family:'Liberation Sans', sans-serif;font-size:11px;line-height:13.75px;color:#5a5a5a;white-space:pre;font-size:10.6px;letter-spacing:-0.15px;">Memory</div>
<div style="left:1361.8px;top:106.31px;font-family:'Liberation Sans', sans-serif;font-size:11px;line-height:13.75px;color:#5a5a5a;white-space:pre;font-size:10.6px;letter-spacing:-0.15px;">Performance</div>
<div style="left:1048.5px;top:121px;width:63.5px;height:2px;background:#1a73e8;"></div>
<svg style="position:absolute;left:1439px;top:108px;width:9px;height:8px" viewBox="0 0 9 8"><path d="M1 1l3 3-3 3M5 1l3 3-3 3" stroke="#5a5a5a" stroke-width="1.2" fill="none"/></svg>
<div style="left:1512px;top:105px;width:1px;height:14px;background:#ccc;"></div>
<svg style="position:absolute;left:1522px;top:105px;width:14px;height:14px" viewBox="0 0 14 14"><g fill="#6e6e6e"><rect x="5.5" y="0" width="3" height="14" transform="rotate(0 7 7)"/><rect x="5.5" y="0" width="3" height="14" transform="rotate(45 7 7)"/><rect x="5.5" y="0" width="3" height="14" transform="rotate(90 7 7)"/><rect x="5.5" y="0" width="3" height="14" transform="rotate(135 7 7)"/></g><circle cx="7" cy="7" r="4.8" fill="#6e6e6e"/><circle cx="7" cy="7" r="2" fill="#f3f3f3"/></svg>
<div style="left:1552.5px;top:106.0px;width:3px;height:3px;background:#6e6e6e;border-radius:50%;"></div>
<div style="left:1552.5px;top:110.5px;width:3px;height:3px;background:#6e6e6e;border-radius:50%;"></div>
<div style="left:1552.5px;top:115.0px;width:3px;height:3px;background:#6e6e6e;border-radius:50%;"></div>
<svg style="position:absolute;left:1574px;top:107px;width:10px;height:10px" viewBox="0 0 10 10"><path d="M1 1l8 8M9 1l-8 8" stroke="#6e6e6e" stroke-width="1.4"/></svg>
<div style="left:987px;top:289px;width:591px;height:14.5px;background:#cfe8fc;"></div>
<div style="left:990px;top:450.5px;width:585px;height:14.5px;background:#eaf1fb;border-radius:3px;"></div>
<div style="left:988.5px;top:289.34px;font-family:'Liberation Sans', sans-serif;font-size:12px;line-height:15.0px;color:#555;white-space:pre;font-size:8px;letter-spacing:-0.2px;">•••</div>
<svg style="position:absolute;left:1097.5px;top:125.8px;width:6.5px;height:5.5px" viewBox="0 0 7 6"><path d="M0 0h7L3.5 6z" fill="#727272"/></svg>
<div style="left:1106.5px;top:124.63px;font-family:'Liberation Mono', monospace;font-size:9.72px;line-height:12.15px;color:#222;white-space:pre;"><span style="color:#9e849c">&lt;</span><span style="color:#881280">div</span> <span style="color:#994500">class</span><span style="color:#9e849c">=</span><span style="color:#1a1aa6">"</span><span style="color:#1a1aa6">inside</span><span style="color:#1a1aa6">"</span><span style="color:#9e849c">&gt;</span></div>
<svg style="position:absolute;left:1108.2px;top:140.8px;width:6.5px;height:5.5px" viewBox="0 0 7 6"><path d="M0 0h7L3.5 6z" fill="#727272"/></svg>
<div style="left:1117.23px;top:139.63px;font-family:'Liberation Mono', monospace;font-size:9.72px;line-height:12.15px;color:#222;white-space:pre;"><span style="color:#9e849c">&lt;</span><span style="color:#881280">div</span> <span style="color:#994500">id</span><span style="color:#9e849c">=</span><span style="color:#1a1aa6">"</span><span style="color:#1a1aa6">cf7s</span><span style="color:#1a1aa6">"</span> <span style="color:#994500">class</span><span style="color:#9e849c">=</span><span style="color:#1a1aa6">"</span><span style="color:#1a1aa6">cf7-42</span><span style="color:#1a1aa6">"</span><span style="color:#9e849c">&gt;</span></div>
<svg style="position:absolute;left:1119.0px;top:155.8px;width:6.5px;height:5.5px" viewBox="0 0 7 6"><path d="M0 0h7L3.5 6z" fill="#727272"/></svg>
<div style="left:1127.96px;top:154.63px;font-family:'Liberation Mono', monospace;font-size:9.72px;line-height:12.15px;color:#222;white-space:pre;"><span style="color:#9e849c">&lt;</span><span style="color:#881280">div</span> <span style="color:#994500">class</span><span style="color:#9e849c">=</span><span style="color:#1a1aa6">"</span><span style="color:#1a1aa6">cf7s</span><span style="color:#1a1aa6">"</span><span style="color:#9e849c">&gt;</span></div>
<svg style="position:absolute;left:1131.1px;top:170.7px;width:5px;height:7px" viewBox="0 0 6 8"><path d="M0 0v8l6-4z" fill="#727272"/></svg>
<div style="left:1138.69px;top:169.93px;font-family:'Liberation Mono', monospace;font-size:9.72px;line-height:12.15px;color:#222;white-space:pre;"><span style="color:#9e849c">&lt;</span><span style="color:#881280">h2</span> <span style="color:#994500">class</span><span style="color:#9e849c">=</span><span style="color:#1a1aa6">"</span><span style="color:#1a1aa6">nav-tab-wrapper default</span><span style="color:#1a1aa6">"</span><span style="color:#9e849c">&gt;</span><span style="color:#222">…</span><span style="color:#9e849c">&lt;/</span><span style="color:#881280">h2</span><span style="color:#9e849c">&gt;</span></div>
<svg style="position:absolute;left:1129.7px;top:186.4px;width:6.5px;height:5.5px" viewBox="0 0 7 6"><path d="M0 0h7L3.5 6z" fill="#727272"/></svg>
<div style="left:1138.69px;top:185.23px;font-family:'Liberation Mono', monospace;font-size:9.72px;line-height:12.15px;color:#222;white-space:pre;"><span style="color:#9e849c">&lt;</span><span style="color:#881280">div</span> <span style="color:#994500">class</span><span style="color:#9e849c">=</span><span style="color:#1a1aa6">"</span><span style="color:#1a1aa6">nav-tab-content default</span><span style="color:#1a1aa6">"</span><span style="color:#9e849c">&gt;</span></div>
<svg style="position:absolute;left:1140.4px;top:201.6px;width:6.5px;height:5.5px" viewBox="0 0 7 6"><path d="M0 0h7L3.5 6z" fill="#727272"/></svg>
<div style="left:1149.42px;top:200.43px;font-family:'Liberation Mono', monospace;font-size:9.72px;line-height:12.15px;color:#222;white-space:pre;"><span style="color:#9e849c">&lt;</span><span style="color:#881280">div</span> <span style="color:#994500">id</span><span style="color:#9e849c">=</span><span style="color:#1a1aa6">"</span><span style="color:#1a1aa6">tab-visual</span><span style="color:#1a1aa6">"</span> <span style="color:#994500">class</span><span style="color:#9e849c">=</span><span style="color:#1a1aa6">"</span><span style="color:#1a1aa6">tab-content wp-clearfix tab-active</span><span style="color:#1a1aa6">"</span><span style="color:#9e849c">&gt;</span></div>
<svg style="position:absolute;left:1151.2px;top:216.8px;width:6.5px;height:5.5px" viewBox="0 0 7 6"><path d="M0 0h7L3.5 6z" fill="#727272"/></svg>
<div style="left:1160.15px;top:215.63px;font-family:'Liberation Mono', monospace;font-size:9.72px;line-height:12.15px;color:#222;white-space:pre;"><span style="color:#9e849c">&lt;</span><span style="color:#881280">div</span> <span style="color:#994500">class</span><span style="color:#9e849c">=</span><span style="color:#1a1aa6">"</span><span style="color:#1a1aa6">cf7s-visual-root___3HBOR</span><span style="color:#1a1aa6">"</span><span style="color:#9e849c">&gt;</span></div>
<svg style="position:absolute;left:1161.9px;top:232.0px;width:6.5px;height:5.5px" viewBox="0 0 7 6"><path d="M0 0h7L3.5 6z" fill="#727272"/></svg>
<div style="left:1170.88px;top:230.83px;font-family:'Liberation Mono', monospace;font-size:9.72px;line-height:12.15px;color:#222;white-space:pre;"><span style="color:#9e849c">&lt;</span><span style="color:#881280">div</span> <span style="color:#994500">class</span><span style="color:#9e849c">=</span><span style="color:#1a1aa6">"</span><span style="color:#1a1aa6">Form___vhG7t</span><span style="color:#1a1aa6">"</span><span style="color:#9e849c">&gt;</span></div>
<svg style="position:absolute;left:1172.6px;top:247.2px;width:6.5px;height:5.5px" viewBox="0 0 7 6"><path d="M0 0h7L3.5 6z" fill="#727272"/></svg>
<div style="left:1181.61px;top:246.03px;font-family:'Liberation Mono', monospace;font-size:9.72px;line-height:12.15px;color:#222;white-space:pre;"><span style="color:#9e849c">&lt;</span><span style="color:#881280">div</span> <span style="color:#994500">class</span><span style="color:#9e849c">=</span><span style="color:#1a1aa6">"</span><span style="color:#1a1aa6">FormItems___3Nq_r</span><span style="color:#1a1aa6">"</span><span style="color:#9e849c">&gt;</span></div>
<svg style="position:absolute;left:1184.7px;top:262.1px;width:5px;height:7px" viewBox="0 0 6 8"><path d="M0 0v8l6-4z" fill="#727272"/></svg>
<div style="left:1192.34px;top:261.33px;font-family:'Liberation Mono', monospace;font-size:9.72px;line-height:12.15px;color:#222;white-space:pre;"><span style="color:#9e849c">&lt;</span><span style="color:#881280">div</span> <span style="color:#994500">class</span><span style="color:#9e849c">=</span><span style="color:#1a1aa6">"</span><span style="color:#1a1aa6">Controls___kju7p</span><span style="color:#1a1aa6">"</span><span style="color:#9e849c">&gt;</span><span style="color:#222">…</span><span style="color:#9e849c">&lt;/</span><span style="color:#881280">div</span><span style="color:#9e849c">&gt;</span></div>
<div style="left:1192.34px;top:276.63px;font-family:'Liberation Mono', monospace;font-size:9.72px;line-height:12.15px;color:#222;white-space:pre;"><span style="color:#9e849c">&lt;</span><span style="color:#881280">div</span> <span style="color:#994500">class</span><span style="color:#9e849c">=</span><span style="color:#1a1aa6">"</span><span style="color:#1a1aa6">FormNotice___S7kYy</span><span style="color:#1a1aa6">"</span><span style="color:#9e849c">&gt;</span><span style="color:#9e849c">&lt;/</span><span style="color:#881280">div</span><span style="color:#9e849c">&gt;</span></div>
<svg style="position:absolute;left:1183.3px;top:293.0px;width:6.5px;height:5.5px" viewBox="0 0 7 6"><path d="M0 0h7L3.5 6z" fill="#727272"/></svg>
<div style="left:1192.34px;top:291.83px;font-family:'Liberation Mono', monospace;font-size:9.72px;line-height:12.15px;color:#222;white-space:pre;"><span style="color:#9e849c">&lt;</span><span style="color:#881280">div</span> <span style="color:#994500">class</span><span style="color:#9e849c">=</span><span style="color:#1a1aa6">"</span><span style="color:#1a1aa6">Items___1jMS3</span><span style="color:#1a1aa6">"</span><span style="color:#9e849c">&gt;</span><span style="color:#6f6f6f;font-style:italic"> == $0</span></div>
<svg style="position:absolute;left:1194.1px;top:308.4px;width:6.5px;height:5.5px" viewBox="0 0 7 6"><path d="M0 0h7L3.5 6z" fill="#727272"/></svg>
<div style="left:1203.07px;top:307.23px;font-family:'Liberation Mono', monospace;font-size:9.72px;line-height:12.15px;color:#222;white-space:pre;"><span style="color:#9e849c">&lt;</span><span style="color:#881280">div</span> <span style="color:#994500">class</span><span style="color:#9e849c">=</span><span style="color:#1a1aa6">"rst__tree"</span> <span style="color:#994500">style</span><span style="color:#9e849c">=</span><span style="color:#1a1aa6">"height: 100%; position: relative;</span></div>
<div style="left:1193.77px;top:321.53px;font-family:'Liberation Mono', monospace;font-size:9.72px;line-height:12.15px;color:#222;white-space:pre;"><span style="color:#1a1aa6">"</span><span style="color:#9e849c">&gt;</span></div>
<svg style="position:absolute;left:1204.8px;top:338.0px;width:6.5px;height:5.5px" viewBox="0 0 7 6"><path d="M0 0h7L3.5 6z" fill="#727272"/></svg>
<div style="left:1213.8px;top:336.83px;font-family:'Liberation Mono', monospace;font-size:9.72px;line-height:12.15px;color:#222;white-space:pre;"><span style="color:#9e849c">&lt;</span><span style="color:#881280">div</span> <span style="color:#994500">style</span><span style="color:#9e849c">=</span><span style="color:#1a1aa6">"overflow: visible; height: 0px; width: 0px;"</span><span style="color:#9e849c">&gt;</span></div>
<svg style="position:absolute;left:1216.9px;top:352.7px;width:5px;height:7px" viewBox="0 0 6 8"><path d="M0 0v8l6-4z" fill="#727272"/></svg>
<div style="left:1224.53px;top:351.93px;font-family:'Liberation Mono', monospace;font-size:9.72px;line-height:12.15px;color:#222;white-space:pre;"><span style="color:#9e849c">&lt;</span><span style="color:#881280">div</span> <span style="color:#994500">aria-label</span><span style="color:#9e849c">=</span><span style="color:#1a1aa6">"grid"</span> <span style="color:#994500">aria-readonly</span><span style="color:#9e849c">=</span><span style="color:#1a1aa6">"true"</span> <span style="color:#994500">class</span><span style="color:#9e849c">=</span><span style="color:#1a1aa6">"ReactVirt</span></div>
<div style="left:1215.23px;top:366.23px;font-family:'Liberation Mono', monospace;font-size:9.72px;line-height:12.15px;color:#222;white-space:pre;"><span style="color:#1a1aa6">ualized__Grid ReactVirtualized__List rst__virtualScrollOverri</span></div>
<div style="left:1215.23px;top:380.53px;font-family:'Liberation Mono', monospace;font-size:9.72px;line-height:12.15px;color:#222;white-space:pre;"><span style="color:#1a1aa6">de"</span> <span style="color:#994500">role</span><span style="color:#9e849c">=</span><span style="color:#1a1aa6">"grid"</span> <span style="color:#994500">tabindex</span><span style="color:#9e849c">=</span><span style="color:#1a1aa6">"0"</span> <span style="color:#994500">style</span><span style="color:#9e849c">=</span><span style="color:#1a1aa6">"box-sizing: border-box; d</span></div>
<div style="left:1215.23px;top:394.83px;font-family:'Liberation Mono', monospace;font-size:9.72px;line-height:12.15px;color:#222;white-space:pre;"><span style="color:#1a1aa6">irection: ltr; height: 863px; position: relative; width: 662p</span></div>
<div style="left:1215.23px;top:409.13px;font-family:'Liberation Mono', monospace;font-size:9.72px;line-height:12.15px;color:#222;white-space:pre;"><span style="color:#1a1aa6">x; will-change: transform; overflow: hidden; padding: 20px;"</span><span style="color:#9e849c">&gt;</span></div>
<div style="left:1215.23px;top:423.43px;font-family:'Liberation Mono', monospace;font-size:9.72px;line-height:12.15px;color:#222;white-space:pre;"><span style="color:#222">…</span><span style="color:#9e849c">&lt;/</span><span style="color:#881280">div</span><span style="color:#9e849c">&gt;</span></div>
<div style="left:1213.8px;top:438.43px;font-family:'Liberation Mono', monospace;font-size:9.72px;line-height:12.15px;color:#222;white-space:pre;"><span style="color:#9e849c">&lt;/</span><span style="color:#881280">div</span><span style="color:#9e849c">&gt;</span></div>
<svg style="position:absolute;left:1204.8px;top:454.5px;width:6.5px;height:5.5px" viewBox="0 0 7 6"><path d="M0 0h7L3.5 6z" fill="#727272"/></svg>
<div style="left:1213.8px;top:453.33px;font-family:'Liberation Mono', monospace;font-size:9.72px;line-height:12.15px;color:#222;white-space:pre;"><span style="color:#9e849c">&lt;</span><span style="color:#881280">div</span> <span style="color:#994500">class</span><span style="color:#9e849c">=</span><span style="color:#1a1aa6">"</span><span style="color:#1a1aa6">resize-triggers</span><span style="color:#1a1aa6">"</span><span style="color:#9e849c">&gt;</span></div>
<svg style="position:absolute;left:1216.9px;top:469.4px;width:5px;height:7px" viewBox="0 0 6 8"><path d="M0 0v8l6-4z" fill="#727272"/></svg>
<div style="left:1224.53px;top:468.63px;font-family:'Liberation Mono', monospace;font-size:9.72px;line-height:12.15px;color:#222;white-space:pre;"><span style="color:#9e849c">&lt;</span><span style="color:#881280">div</span> <span style="color:#994500">class</span><span style="color:#9e849c">=</span><span style="color:#1a1aa6">"</span><span style="color:#1a1aa6">expand-trigger</span><span style="color:#1a1aa6">"</span><span style="color:#9e849c">&gt;</span><span style="color:#222">…</span><span style="color:#9e849c">&lt;/</span><span style="color:#881280">div</span><span style="color:#9e849c">&gt;</span></div>
<svg style="position:absolute;left:1216.9px;top:484.4px;width:5px;height:7px" viewBox="0 0 6 8"><path d="M0 0v8l6-4z" fill="#727272"/></svg>
<div style="left:1224.53px;top:483.63px;font-family:'Liberation Mono', monospace;font-size:9.72px;line-height:12.15px;color:#222;white-space:pre;"><span style="color:#9e849c">&lt;</span><span style="color:#881280">div</span> <span style="color:#994500">class</span><span style="color:#9e849c">=</span><span style="color:#1a1aa6">"</span><span style="color:#1a1aa6">contract-trigger</span><span style="color:#1a1aa6">"</span><span style="color:#9e849c">&gt;</span><span style="color:#222">…</span><span style="color:#9e849c">&lt;/</span><span style="color:#881280">div</span><span style="color:#9e849c">&gt;</span></div>
<div style="left:1213.8px;top:498.93px;font-family:'Liberation Mono', monospace;font-size:9.72px;line-height:12.15px;color:#222;white-space:pre;"><span style="color:#9e849c">&lt;/</span><span style="color:#881280">div</span><span style="color:#9e849c">&gt;</span></div>
<div style="left:1203.07px;top:514.13px;font-family:'Liberation Mono', monospace;font-size:9.72px;line-height:12.15px;color:#222;white-space:pre;"><span style="color:#9e849c">&lt;/</span><span style="color:#881280">div</span><span style="color:#9e849c">&gt;</span></div>
<div style="left:1192.34px;top:529.33px;font-family:'Liberation Mono', monospace;font-size:9.72px;line-height:12.15px;color:#222;white-space:pre;"><span style="color:#9e849c">&lt;/</span><span style="color:#881280">div</span><span style="color:#9e849c">&gt;</span></div>
<div style="left:1181.61px;top:544.63px;font-family:'Liberation Mono', monospace;font-size:9.72px;line-height:12.15px;color:#222;white-space:pre;"><span style="color:#9e849c">&lt;/</span><span style="color:#881280">div</span><span style="color:#9e849c">&gt;</span></div>
<svg style="position:absolute;left:1174.0px;top:560.6px;width:5px;height:7px" viewBox="0 0 6 8"><path d="M0 0v8l6-4z" fill="#727272"/></svg>
<div style="left:1181.61px;top:559.83px;font-family:'Liberation Mono', monospace;font-size:9.72px;line-height:12.15px;color:#222;white-space:pre;"><span style="color:#9e849c">&lt;</span><span style="color:#881280">div</span> <span style="color:#994500">class</span><span style="color:#9e849c">=</span><span style="color:#1a1aa6">"</span><span style="color:#1a1aa6">Operate___2qc0q</span><span style="color:#1a1aa6">"</span><span style="color:#9e849c">&gt;</span><span style="color:#222">…</span><span style="color:#9e849c">&lt;/</span><span style="color:#881280">div</span><span style="color:#9e849c">&gt;</span></div>
<svg style="position:absolute;left:1174.0px;top:575.8px;width:5px;height:7px" viewBox="0 0 6 8"><path d="M0 0v8l6-4z" fill="#727272"/></svg>
<div style="left:1181.61px;top:575.03px;font-family:'Liberation Mono', monospace;font-size:9.72px;line-height:12.15px;color:#222;white-space:pre;"><span style="color:#9e849c">&lt;</span><span style="color:#881280">div</span> <span style="color:#994500">class</span><span style="color:#9e849c">=</span><span style="color:#1a1aa6">"</span><span style="color:#1a1aa6">Action___2qEzr</span><span style="color:#1a1aa6">"</span><span style="color:#9e849c">&gt;</span><span style="color:#222">…</span><span style="color:#9e849c">&lt;/</span><span style="color:#881280">div</span><span style="color:#9e849c">&gt;</span></div>
<div style="left:1170.88px;top:590.13px;font-family:'Liberation Mono', monospace;font-size:9.72px;line-height:12.15px;color:#222;white-space:pre;"><span style="color:#9e849c">&lt;/</span><span style="color:#881280">div</span><span style="color:#9e849c">&gt;</span></div>
<div style="left:1160.15px;top:604.13px;font-family:'Liberation Mono', monospace;font-size:9.72px;line-height:12.15px;color:#222;white-space:pre;"><span style="color:#9e849c">&lt;/</span><span style="color:#881280">div</span><span style="color:#9e849c">&gt;</span></div>
<div style="left:1578px;top:124px;width:15px;height:484px;background:#f1f1f1;"></div>
<svg style="position:absolute;left:1581px;top:129px;width:9px;height:5px" viewBox="0 0 9 5"><path d="M0 5L4.5 0 9 5z" fill="#505050"/></svg>
<div style="left:1580px;top:240px;width:11px;height:83px;background:#c1c1c1;"></div>
<svg style="position:absolute;left:1581px;top:598px;width:9px;height:5px" viewBox="0 0 9 5"><path d="M0 0L4.5 5 9 0z" fill="#505050"/></svg>
<div style="left:987px;top:609px;width:606px;height:1px;background:#cbcdd1;"></div>
<div style="left:987px;top:610px;width:606px;height:20px;background:#fff;"></div>
<div style="left:990px;top:612px;width:21px;height:17px;background:#f0f0f0;"></div>
<div style="left:992.5px;top:612.84px;font-family:'Liberation Sans', sans-serif;font-size:12px;line-height:15.0px;color:#333;white-space:pre;font-size:6.5px;letter-spacing:0.6px;">•••</div>
<div style="left:1471.5px;top:610px;width:98px;height:20px;background:#f1f1f1;"></div>
<div style="left:1011px;top:614.31px;font-family:'Liberation Sans', sans-serif;font-size:11px;line-height:13.75px;color:#000;white-space:pre;font-size:10.6px;letter-spacing:-0.2px;"><span style="color:#994500">-clearfix.tab-active</span></div>
<div style="left:1112.7px;top:614.31px;font-family:'Liberation Sans', sans-serif;font-size:11px;line-height:13.75px;color:#000;white-space:pre;font-size:10.6px;letter-spacing:-0.2px;"><span style="color:#881280">div</span><span style="color:#994500">.cf7s-visual-root___3HBOR</span></div>
<div style="left:1262.4px;top:614.31px;font-family:'Liberation Sans', sans-serif;font-size:11px;line-height:13.75px;color:#000;white-space:pre;font-size:10.6px;letter-spacing:-0.2px;"><span style="color:#881280">div</span><span style="color:#994500">.Form___vhG7t</span></div>
<div style="left:1357.2px;top:614.31px;font-family:'Liberation Sans', sans-serif;font-size:11px;line-height:13.75px;color:#000;white-space:pre;font-size:10.6px;letter-spacing:-0.2px;"><span style="color:#881280">div</span><span style="color:#994500">.FormItems___3Nq_r</span></div>
<div style="left:1478px;top:614.31px;font-family:'Liberation Sans', sans-serif;font-size:11px;line-height:13.75px;color:#000;white-space:pre;font-size:10.6px;letter-spacing:-0.2px;"><span style="color:#881280">div</span><span style="color:#994500">.Items___1jMS3</span></div>
<div style="left:1577px;top:614.31px;font-family:'Liberation Sans', sans-serif;font-size:11px;line-height:13.75px;color:#999;white-space:pre;font-size:11px;">…</div>
<div style="left:987px;top:630px;width:606px;height:1px;background:#cbcdd1;"></div>
<div style="left:987px;top:631px;width:606px;height:24px;background:#f3f3f3;"></div>
<div style="left:987px;top:655px;width:606px;height:1px;background:#cbcdd1;"></div>
<div style="left:995.7px;top:637.31px;font-family:'Liberation Sans', sans-serif;font-size:11px;line-height:13.75px;color:#333;white-space:pre;font-size:10.6px;letter-spacing:-0.2px;">Styles</div>
<div style="left:1040px;top:637.31px;font-family:'Liberation Sans', sans-serif;font-size:11px;line-height:13.75px;color:#5a5a5a;white-space:pre;font-size:10.6px;letter-spacing:-0.2px;">Computed</div>
<div style="left:1108px;top:637.31px;font-family:'Liberation Sans', sans-serif;font-size:11px;line-height:13.75px;color:#5a5a5a;white-space:pre;font-size:10.6px;letter-spacing:-0.2px;">Layout</div>
<div style="left:1157px;top:637.31px;font-family:'Liberation Sans', sans-serif;font-size:11px;line-height:13.75px;color:#5a5a5a;white-space:pre;font-size:10.6px;letter-spacing:-0.2px;">Event Listeners</div>
<div style="left:1244.7px;top:637.31px;font-family:'Liberation Sans', sans-serif;font-size:11px;line-height:13.75px;color:#5a5a5a;white-space:pre;font-size:10.6px;letter-spacing:-0.2px;">DOM Breakpoints</div>
<div style="left:1346.5px;top:637.31px;font-family:'Liberation Sans', sans-serif;font-size:11px;line-height:13.75px;color:#5a5a5a;white-space:pre;font-size:10.6px;letter-spacing:-0.2px;">Properties</div>
<div style="left:1411.6px;top:637.31px;font-family:'Liberation Sans', sans-serif;font-size:11px;line-height:13.75px;color:#5a5a5a;white-space:pre;font-size:10.6px;letter-spacing:-0.2px;">Accessibility</div>
<div style="left:987px;top:653px;width:44px;height:2px;background:#1a73e8;"></div>
<div style="left:987px;top:656px;width:606px;height:24px;background:#f3f3f3;"></div>
<div style="left:990px;top:658px;width:467px;height:18px;background:#fff;"></div>
<div style="left:993px;top:661.31px;font-family:'Liberation Sans', sans-serif;font-size:11px;line-height:13.75px;color:#777;white-space:pre;font-size:10.6px;">Filter</div>
<div style="left:1466.6px;top:663.33px;font-family:'Liberation Mono', monospace;font-size:9.72px;line-height:12.15px;color:#333;white-space:pre;-webkit-text-stroke:0.25px #333;">:hov</div>
<div style="left:1498.5px;top:663.33px;font-family:'Liberation Mono', monospace;font-size:9.72px;line-height:12.15px;color:#333;white-space:pre;-webkit-text-stroke:0.25px #333;">.cls</div>
<div style="left:1534.5px;top:666px;width:9px;height:1.3px;background:#444;"></div>
<div style="left:1538.3px;top:662.2px;width:1.3px;height:9px;background:#444;"></div>
<svg style="position:absolute;left:1544px;top:672px;width:4px;height:4px" viewBox="0 0 4 4"><path d="M4 0v4H0z" fill="#444"/></svg>
<svg style="position:absolute;left:1556px;top:660px;width:14px;height:14px" viewBox="0 0 14 14"><rect x="0.6" y="0.6" width="12.8" height="12.8" fill="none" stroke="#555" stroke-width="1.2"/><path d="M9 1v12" stroke="#555" stroke-width="1.2"/><path d="M7.5 4L4 7l3.5 3z" fill="#555"/></svg>
<div style="left:987px;top:680px;width:591px;height:1px;background:#fff;"></div>
<div style="left:990.5px;top:683.13px;font-family:'Liberation Mono', monospace;font-size:9.72px;line-height:12.15px;color:#555;white-space:pre;">element.style {</div>
<div style="left:990.5px;top:696.63px;font-family:'Liberation Mono', monospace;font-size:9.72px;line-height:12.15px;color:#555;white-space:pre;">}</div>
<div style="left:987px;top:711px;width:591px;height:1px;background:#dcdcdc;"></div>
<div style="left:990.5px;top:715.83px;font-family:'Liberation Mono', monospace;font-size:9.72px;line-height:12.15px;color:#222;white-space:pre;">.Items___1jMS3 <span style="color:#777">{</span></div>
<div style="left:1511.5px;top:715.83px;font-family:'Liberation Mono', monospace;font-size:9.72px;line-height:12.15px;color:#555;white-space:pre;text-decoration:underline;">index.css:2</div>
<div style="left:1006.4px;top:730.13px;font-family:'Liberation Mono', monospace;font-size:9.72px;line-height:12.15px;color:#222;white-space:pre;"><span style="color:#c80000">width</span>: 100%;</div>
<div style="left:1006.4px;top:742.63px;font-family:'Liberation Mono', monospace;font-size:9.72px;line-height:12.15px;color:#222;white-space:pre;"><span style="color:#c80000">height</span>: 100%;</div>
<div style="left:1006.4px;top:755.13px;font-family:'Liberation Mono', monospace;font-size:9.72px;line-height:12.15px;color:#222;white-space:pre;"><span style="color:#c80000">background</span>:<span style="display:inline-block;width:5.83px;height:5px;position:relative"><svg style="position:absolute;left:1.5px;top:-1.5px;width:4.5px;height:6.5px" viewBox="0 0 5 7"><path d="M0 0v7l5-3.5z" fill="#666"/></svg></span> <span style="display:inline-block;width:8px;height:8px;border:1px solid #777;box-sizing:border-box;vertical-align:-1px;background:#fff"></span>#fff;</div>
<div style="left:1006.4px;top:767.63px;font-family:'Liberation Mono', monospace;font-size:9.72px;line-height:12.15px;color:#222;white-space:pre;"><span style="color:#c80000">resize</span>: vertical;</div>
<div style="left:1006.4px;top:780.13px;font-family:'Liberation Mono', monospace;font-size:9.72px;line-height:12.15px;color:#222;white-space:pre;"><span style="color:#c80000">padding-bottom</span>: 15px;</div>
<div style="left:990.5px;top:793.33px;font-family:'Liberation Mono', monospace;font-size:9.72px;line-height:12.15px;color:#555;white-space:pre;">}</div>
<div style="left:987px;top:807px;width:591px;height:1px;background:#dcdcdc;"></div>
<div style="left:990.5px;top:811.83px;font-family:'Liberation Mono', monospace;font-size:9.72px;line-height:12.15px;color:#555;white-space:pre;">a, div {</div>
<div style="left:1441.5px;top:811.83px;font-family:'Liberation Mono', monospace;font-size:9.72px;line-height:12.15px;color:#555;white-space:pre;text-decoration:underline;">common.min.…ver=5.6.1:2</div>
<div style="left:1006.4px;top:825.63px;font-family:'Liberation Mono', monospace;font-size:9.72px;line-height:12.15px;color:#222;white-space:pre;"><span style="color:#c80000">outline</span>:<span style="display:inline-block;width:5.83px;height:5px;position:relative"><svg style="position:absolute;left:1.5px;top:-1.5px;width:4.5px;height:6.5px" viewBox="0 0 5 7"><path d="M0 0v7l5-3.5z" fill="#666"/></svg></span> 0;</div>
<div style="left:990.5px;top:838.33px;font-family:'Liberation Mono', monospace;font-size:9.72px;line-height:12.15px;color:#555;white-space:pre;">}</div>
<div style="left:1578px;top:681px;width:15px;height:160px;background:#f1f1f1;"></div>
<svg style="position:absolute;left:1581px;top:661px;width:9px;height:5px" viewBox="0 0 9 5"><path d="M0 5L4.5 0 9 5z" fill="#a0a0a0"/></svg>
<div style="left:1578px;top:656px;width:15px;height:25px;background:#f1f1f1;"></div>
<svg style="position:absolute;left:1581px;top:661px;width:9px;height:5px" viewBox="0 0 9 5"><path d="M0 5L4.5 0 9 5z" fill="#a0a0a0"/></svg>
<div style="left:1580px;top:670px;width:11px;height:32px;background:#c1c1c1;"></div>
<svg style="position:absolute;left:1581px;top:831px;width:9px;height:5px" viewBox="0 0 9 5"><path d="M0 0L4.5 5 9 0z" fill="#505050"/></svg>
<div style="left:987px;top:841px;width:591px;height:15px;background:#f1f1f1;"></div>
<div style="left:1578px;top:841px;width:15px;height:15px;background:#dcdcdc;"></div>
<svg style="position:absolute;left:992px;top:845px;width:5px;height:8px" viewBox="0 0 5 8"><path d="M5 0v8L0 4z" fill="#a0a0a0"/></svg>
<svg style="position:absolute;left:1568px;top:845px;width:5px;height:8px" viewBox="0 0 5 8"><path d="M0 0v8l5-4z" fill="#a0a0a0"/></svg>
<div style="left:6px;top:856px;width:1588px;height:1px;background:#1d3550;"></div>
<div style="left:0px;top:857px;width:1600px;height:7px;background:linear-gradient(90deg,#05a6e8,#0486d0 40%,#0a4fb8 80%,#0840b0);"></div>
</body></html>
